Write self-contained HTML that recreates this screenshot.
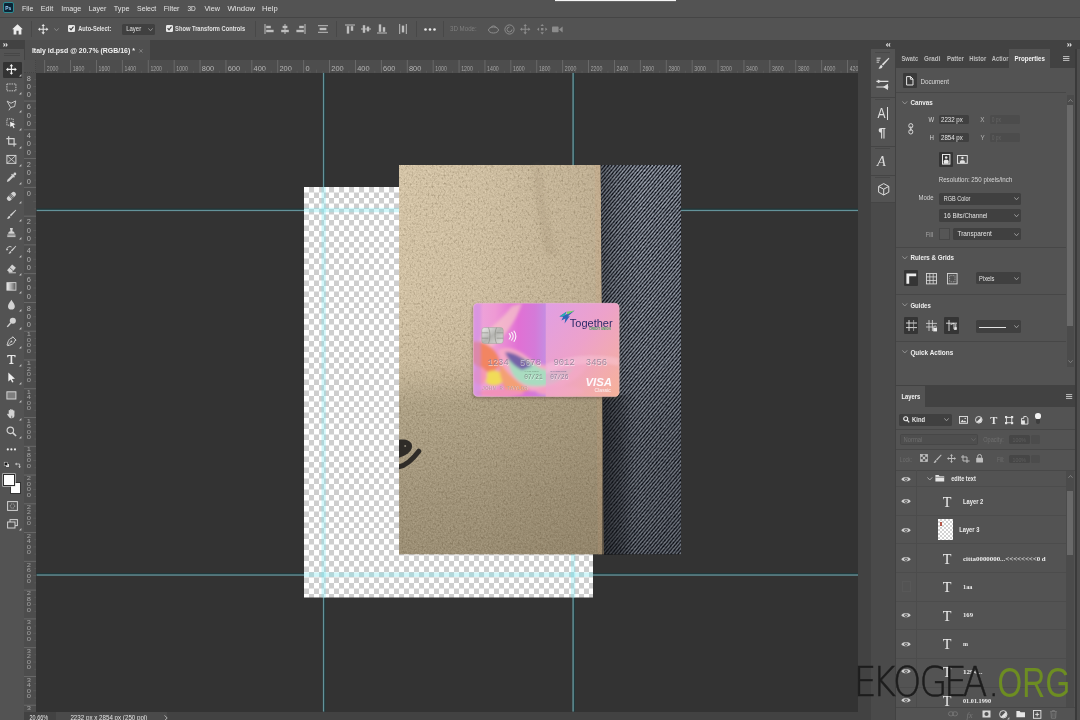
<!DOCTYPE html>
<html lang="en"><head><meta charset="utf-8"><title>Italy id.psd @ 20.7% (RGB/16)</title>
<style>
*{box-sizing:border-box;margin:0;padding:0}
html,body{width:1080px;height:720px;overflow:hidden;background:#535353}
body{position:relative;font-family:"Liberation Sans",sans-serif;font-size:7px;color:#dcdcdc}
.a{position:absolute}
svg{position:absolute;overflow:visible}
.tx{will-change:transform}
.dd{position:absolute;background:#404040;border-radius:1.5px}
.sep{position:absolute;background:#474747;height:1px}
.vsep{position:absolute;background:#484848;width:1px}
text{white-space:pre}
</style></head>
<body>
<div class="a" style="left:0;top:0;width:1080px;height:17px;background:#535353"></div>
<div class="a" style="left:555.4px;top:0;width:121px;height:1.1px;background:#f6f6f6"></div>
<div class="a" style="left:555.4px;top:1.1px;width:121px;height:1px;background:#666"></div>
<div class="a" style="left:3.2px;top:2.4px;width:10.8px;height:10.6px;background:#0b2536;border:1px solid #2d8c93;border-radius:2px"></div>
<div class="a" style="left:0;top:16.6px;width:1080px;height:1.1px;background:#454545"></div>
<div class="a" style="left:0;top:17.7px;width:1080px;height:22.3px;background:#535353"></div>
<svg style="left:12.2px;top:23.6px" width="11" height="10.6" viewBox="0 0 11 10.6" ><path d="M5.5 0.3 L0.2 5.2 H1.6 V10.4 H4.4 V6.8 H6.6 V10.4 H9.4 V5.2 H10.8 Z" fill="#ececec"/></svg>
<div class="vsep" style="left:30.5px;top:21px;height:16px"></div>
<svg style="left:38.2px;top:23.8px" width="10.4" height="10.4" viewBox="0 0 12 12" ><path d="M6 0 L8 2.4 H6.6 V5.4 H9.6 V4 L12 6 L9.6 8 V6.6 H6.6 V9.6 H8 L6 12 L4 9.6 H5.4 V6.6 H2.4 V8 L0 6 L2.4 4 V5.4 H5.4 V2.4 H4 Z" fill="#e6e6e6"/></svg>
<svg style="left:54.2px;top:27.6px" width="5" height="3.4" viewBox="0 0 5 3.4" ><path d="M0.4 0.4 L2.5 2.8 L4.6 0.4" fill="none" stroke="#8e8e8e" stroke-width="0.9"/></svg>
<div class="a" style="left:68.2px;top:25px;width:7px;height:7px;background:#e8e8e8;border-radius:1.2px"></div>
<svg style="left:69.2px;top:26.2px" width="5" height="4.6" viewBox="0 0 5 4.6" ><path d="M0.6 2.2 L2 3.8 L4.5 0.6" fill="none" stroke="#3a3a3a" stroke-width="1.1"/></svg>
<div class="dd" style="left:122px;top:23.6px;width:32.8px;height:11.4px"></div>
<svg style="left:147.6px;top:27.8px" width="5" height="3.4" viewBox="0 0 5 3.4" ><path d="M0.4 0.4 L2.5 2.8 L4.6 0.4" fill="none" stroke="#9a9a9a" stroke-width="0.9"/></svg>
<div class="a" style="left:165.6px;top:25px;width:7px;height:7px;background:#e8e8e8;border-radius:1.2px"></div>
<svg style="left:166.6px;top:26.2px" width="5" height="4.6" viewBox="0 0 5 4.6" ><path d="M0.6 2.2 L2 3.8 L4.5 0.6" fill="none" stroke="#3a3a3a" stroke-width="1.1"/></svg>
<div class="vsep" style="left:255px;top:21px;height:16px"></div>
<svg style="left:263.9px;top:24px" width="10" height="10" viewBox="0 0 10 10" ><rect x="0.5" y="0" width="1" height="10" fill="#bebebe"/><rect x="2.2" y="1.8" width="4.6" height="2.4" fill="#bebebe"/><rect x="2.2" y="5.8" width="7.4" height="2.4" fill="#bebebe"/></svg>
<svg style="left:280px;top:24px" width="10" height="10" viewBox="0 0 10 10" ><rect x="4.5" y="0" width="1" height="10" fill="#bebebe"/><rect x="2.6" y="1.8" width="4.8" height="2.4" fill="#bebebe"/><rect x="1.2" y="5.8" width="7.6" height="2.4" fill="#bebebe"/></svg>
<svg style="left:296px;top:24px" width="10" height="10" viewBox="0 0 10 10" ><rect x="8.5" y="0" width="1" height="10" fill="#bebebe"/><rect x="3.2" y="1.8" width="4.6" height="2.4" fill="#bebebe"/><rect x="0.4" y="5.8" width="7.4" height="2.4" fill="#bebebe"/></svg>
<svg style="left:317.9px;top:24px" width="10" height="10" viewBox="0 0 10 10" ><rect x="0" y="1.2" width="10" height="1" fill="#bebebe"/><rect x="0" y="7.8" width="10" height="1" fill="#bebebe"/><rect x="1.6" y="3.8" width="6.8" height="2.4" fill="#bebebe"/></svg>
<svg style="left:345px;top:24px" width="10" height="10" viewBox="0 0 10 10" ><rect x="0" y="0.5" width="10" height="1" fill="#bebebe"/><rect x="1.8" y="2.2" width="2.4" height="7.4" fill="#bebebe"/><rect x="5.8" y="2.2" width="2.4" height="4.6" fill="#bebebe"/></svg>
<svg style="left:360.5px;top:24px" width="10" height="10" viewBox="0 0 10 10" ><rect x="0" y="4.5" width="10" height="1" fill="#bebebe"/><rect x="1.8" y="1.2" width="2.4" height="7.6" fill="#bebebe"/><rect x="5.8" y="2.6" width="2.4" height="4.8" fill="#bebebe"/></svg>
<svg style="left:377.2px;top:24px" width="10" height="10" viewBox="0 0 10 10" ><rect x="0" y="8.5" width="10" height="1" fill="#bebebe"/><rect x="1.8" y="0.4" width="2.4" height="7.4" fill="#bebebe"/><rect x="5.8" y="3.2" width="2.4" height="4.6" fill="#bebebe"/></svg>
<svg style="left:398.3px;top:24px" width="10" height="10" viewBox="0 0 10 10" ><rect x="1.2" y="0" width="1" height="10" fill="#bebebe"/><rect x="7.8" y="0" width="1" height="10" fill="#bebebe"/><rect x="3.8" y="1.6" width="2.4" height="6.8" fill="#bebebe"/></svg>
<div class="vsep" style="left:336px;top:21px;height:16px"></div>
<div class="vsep" style="left:415.5px;top:21px;height:16px"></div>
<svg style="left:424.4px;top:27.6px" width="12" height="3" viewBox="0 0 12 3" ><circle cx="1.5" cy="1.5" r="1.3" fill="#eaeaea"/><circle cx="6" cy="1.5" r="1.3" fill="#eaeaea"/><circle cx="10.5" cy="1.5" r="1.3" fill="#eaeaea"/></svg>
<div class="vsep" style="left:443.3px;top:21px;height:16px"></div>
<svg style="left:488px;top:24px" width="11" height="10" viewBox="0 0 11 10" ><ellipse cx="5.5" cy="6" rx="5" ry="3" fill="none" stroke="#8c8c8c" stroke-width="1"/><path d="M2.5 4 A3.2 3.2 0 0 1 8.5 4" fill="none" stroke="#8c8c8c" stroke-width="1"/></svg>
<svg style="left:504px;top:23.6px" width="11" height="11" viewBox="0 0 11 11" ><circle cx="5.5" cy="5.5" r="4.6" fill="none" stroke="#8c8c8c" stroke-width="1"/><path d="M5.5 3 A2.5 2.5 0 1 0 8 5.5" fill="none" stroke="#8c8c8c" stroke-width="1"/></svg>
<svg style="left:519.8px;top:23.8px" width="10.4" height="10.4" viewBox="0 0 12 12" ><path d="M6 0 L8 2.4 H6.6 V5.4 H9.6 V4 L12 6 L9.6 8 V6.6 H6.6 V9.6 H8 L6 12 L4 9.6 H5.4 V6.6 H2.4 V8 L0 6 L2.4 4 V5.4 H5.4 V2.4 H4 Z" fill="#8c8c8c"/></svg>
<svg style="left:536.6px;top:23.8px" width="10.4" height="10.4" viewBox="0 0 12 12" ><path d="M6 0 L8 2.4 H4 Z M6 12 L4 9.6 H8 Z M0 6 L2.4 4 V8 Z M12 6 L9.6 8 V4 Z" fill="#8c8c8c"/><rect x="4.6" y="4.6" width="2.8" height="2.8" fill="#8c8c8c"/></svg>
<svg style="left:552.4px;top:25.6px" width="11" height="7" viewBox="0 0 11 7" ><rect x="0" y="0.6" width="6.6" height="5.6" rx="0.8" fill="#8c8c8c"/><path d="M7 3.5 L10.6 0.6 V6.4 Z" fill="#8c8c8c"/></svg>
<div class="a" style="left:0;top:40px;width:1080px;height:680px;background:#424242"></div>
<div class="a" style="left:24.5px;top:40.4px;width:125px;height:19.6px;background:#4f4f4f"></div>
<svg style="left:139.4px;top:48.6px" width="3.8" height="3.8" viewBox="0 0 3.8 3.8" ><path d="M0.3 0.3 L3.5 3.5 M3.5 0.3 L0.3 3.5" stroke="#8c8c8c" stroke-width="0.8"/></svg>
<div class="a" style="left:0;top:40px;width:24px;height:680px;background:#535353"></div>
<div class="a" style="left:0;top:40px;width:24px;height:8.5px;background:#424242"></div>
<svg style="left:3px;top:42.8px" width="4.6" height="3.8" viewBox="0 0 4.6 3.8" ><path d="M0.5 0.3 L1.8 1.9 L0.5 3.5 M2.8 0.3 L4.1 1.9 L2.8 3.5" fill="none" stroke="#e0e0e0" stroke-width="1.1"/></svg>
<div class="a" style="left:4px;top:53px;width:16px;height:1px;background:#474747"></div>
<div class="a" style="left:4px;top:55px;width:16px;height:1px;background:#474747"></div>
<div class="a" style="left:2.6px;top:61.5px;width:19.6px;height:16.2px;background:#333333;border-radius:1px"></div>
<svg style="left:6.4px;top:63.6px" width="10.8" height="10.8" viewBox="0 0 12 12" ><path d="M6 0 L8 2.4 H6.6 V5.4 H9.6 V4 L12 6 L9.6 8 V6.6 H6.6 V9.6 H8 L6 12 L4 9.6 H5.4 V6.6 H2.4 V8 L0 6 L2.4 4 V5.4 H5.4 V2.4 H4 Z" fill="#f2f2f2"/></svg>
<svg style="left:19.2px;top:73.6px" width="2.4" height="2.4" viewBox="0 0 2.4 2.4" ><path d="M2.4 0 V2.4 H0 Z" fill="#c0c0c0"/></svg>
<svg style="left:6.4px;top:81.73px" width="10.8" height="10.8" viewBox="0 0 12 12" ><rect x="1" y="2.2" width="10" height="7.6" fill="none" stroke="#d2d2d2" stroke-width="1" stroke-dasharray="1.6 1"/></svg>
<svg style="left:19.2px;top:91.73px" width="2.4" height="2.4" viewBox="0 0 2.4 2.4" ><path d="M2.4 0 V2.4 H0 Z" fill="#c0c0c0"/></svg>
<svg style="left:6.4px;top:99.86px" width="10.8" height="10.8" viewBox="0 0 12 12" ><path d="M1.2 1.2 L5.6 3.6 L10.8 1 L9.6 7.2 L5.2 8.4 L3.6 5.6 Z" fill="none" stroke="#d2d2d2" stroke-width="1"/><path d="M5.2 8.4 L3.2 11.4" stroke="#d2d2d2" stroke-width="1"/></svg>
<svg style="left:19.2px;top:109.86px" width="2.4" height="2.4" viewBox="0 0 2.4 2.4" ><path d="M2.4 0 V2.4 H0 Z" fill="#c0c0c0"/></svg>
<svg style="left:6.4px;top:117.99px" width="10.8" height="10.8" viewBox="0 0 12 12" ><rect x="1" y="1" width="7" height="7" fill="none" stroke="#d2d2d2" stroke-width="1" stroke-dasharray="1.4 0.9"/><path d="M4.6 4.2 L10.6 7 L8 7.8 L9.6 10.8 L8.4 11.4 L6.9 8.4 L5 10.2 Z" fill="#f0f0f0"/></svg>
<svg style="left:19.2px;top:127.99px" width="2.4" height="2.4" viewBox="0 0 2.4 2.4" ><path d="M2.4 0 V2.4 H0 Z" fill="#c0c0c0"/></svg>
<svg style="left:6.4px;top:136.12px" width="10.8" height="10.8" viewBox="0 0 12 12" ><path d="M3 0.4 V9 H11.6 M0.4 3 H9 V11.6" fill="none" stroke="#d2d2d2" stroke-width="1.3"/></svg>
<svg style="left:19.2px;top:146.12px" width="2.4" height="2.4" viewBox="0 0 2.4 2.4" ><path d="M2.4 0 V2.4 H0 Z" fill="#c0c0c0"/></svg>
<svg style="left:6.4px;top:154.25px" width="10.8" height="10.8" viewBox="0 0 12 12" ><rect x="1" y="1.6" width="10" height="8.8" fill="none" stroke="#d2d2d2" stroke-width="1.1"/><path d="M1 1.6 L11 10.4 M11 1.6 L1 10.4" stroke="#d2d2d2" stroke-width="0.9"/></svg>
<svg style="left:19.2px;top:164.25px" width="2.4" height="2.4" viewBox="0 0 2.4 2.4" ><path d="M2.4 0 V2.4 H0 Z" fill="#c0c0c0"/></svg>
<svg style="left:6.4px;top:172.38px" width="10.8" height="10.8" viewBox="0 0 12 12" ><path d="M1 11 L1.6 8.6 L6.6 3.6 L8.4 5.4 L3.4 10.4 Z" fill="#d2d2d2"/><path d="M6.2 2.6 L9.4 5.8 M7.6 4.4 L9.6 2.4" stroke="#d2d2d2" stroke-width="1.5"/><circle cx="9.9" cy="2.1" r="1.5" fill="#d2d2d2"/></svg>
<svg style="left:19.2px;top:182.38px" width="2.4" height="2.4" viewBox="0 0 2.4 2.4" ><path d="M2.4 0 V2.4 H0 Z" fill="#c0c0c0"/></svg>
<svg style="left:6.4px;top:190.51px" width="10.8" height="10.8" viewBox="0 0 12 12" ><g transform="rotate(-45 6 6)"><rect x="0" y="3.4" width="12" height="5.2" rx="2.4" fill="#d2d2d2"/><rect x="4.2" y="3.4" width="3.6" height="5.2" fill="#6a6a6a"/><circle cx="5.2" cy="5" r="0.5" fill="#d2d2d2"/><circle cx="6.8" cy="5" r="0.5" fill="#d2d2d2"/><circle cx="5.2" cy="7" r="0.5" fill="#d2d2d2"/><circle cx="6.8" cy="7" r="0.5" fill="#d2d2d2"/></g></svg>
<svg style="left:19.2px;top:200.51px" width="2.4" height="2.4" viewBox="0 0 2.4 2.4" ><path d="M2.4 0 V2.4 H0 Z" fill="#c0c0c0"/></svg>
<svg style="left:6.4px;top:208.64px" width="10.8" height="10.8" viewBox="0 0 12 12" ><path d="M10.8 0.8 L11.4 1.4 L5.6 8 L4.2 6.6 Z" fill="#d2d2d2"/><path d="M3.6 7.4 L4.9 8.7 C4.6 10.6 2.6 11.2 0.8 10.8 C2 10.2 2 8.2 3.6 7.4 Z" fill="#d2d2d2"/></svg>
<svg style="left:19.2px;top:218.64px" width="2.4" height="2.4" viewBox="0 0 2.4 2.4" ><path d="M2.4 0 V2.4 H0 Z" fill="#c0c0c0"/></svg>
<svg style="left:6.4px;top:226.77px" width="10.8" height="10.8" viewBox="0 0 12 12" ><path d="M4.4 1 H7.6 L7 4.8 C8.6 5.2 9.6 5.8 9.6 7.4 H2.4 C2.4 5.8 3.4 5.2 5 4.8 Z" fill="#d2d2d2"/><rect x="1.4" y="8.4" width="9.2" height="1.2" fill="#d2d2d2"/><rect x="1.4" y="10.2" width="9.2" height="1" fill="#d2d2d2"/></svg>
<svg style="left:19.2px;top:236.77px" width="2.4" height="2.4" viewBox="0 0 2.4 2.4" ><path d="M2.4 0 V2.4 H0 Z" fill="#c0c0c0"/></svg>
<svg style="left:6.4px;top:244.9px" width="10.8" height="10.8" viewBox="0 0 12 12" ><path d="M10.8 0.8 L11.4 1.4 L6.6 7.2 L5.4 6 Z" fill="#d2d2d2"/><path d="M4.8 6.6 L6 7.8 C5.6 9.4 4 10 2.6 9.6 C3.6 9 3.6 7.4 4.8 6.6 Z" fill="#d2d2d2"/><path d="M1 5.4 A3.4 3.4 0 0 1 6.2 2.2" fill="none" stroke="#d2d2d2" stroke-width="1"/><path d="M0 4.2 L1 6.4 L2.6 4.6 Z" fill="#d2d2d2"/></svg>
<svg style="left:19.2px;top:254.9px" width="2.4" height="2.4" viewBox="0 0 2.4 2.4" ><path d="M2.4 0 V2.4 H0 Z" fill="#c0c0c0"/></svg>
<svg style="left:6.4px;top:263.03px" width="10.8" height="10.8" viewBox="0 0 12 12" ><path d="M6.8 1.6 L11 5.4 L6.6 10.2 H3.6 L1.2 8 Z" fill="#d2d2d2"/><path d="M3.8 4.8 L8 8.6" stroke="#555" stroke-width="0.9"/><rect x="3" y="10.4" width="8" height="1" fill="#d2d2d2"/></svg>
<svg style="left:19.2px;top:273.03px" width="2.4" height="2.4" viewBox="0 0 2.4 2.4" ><path d="M2.4 0 V2.4 H0 Z" fill="#c0c0c0"/></svg>
<svg style="left:6.4px;top:281.16px" width="10.8" height="10.8" viewBox="0 0 12 12" ><defs><linearGradient id="tg" x1="0" x2="1"><stop offset="0" stop-color="#f4f4f4"/><stop offset="1" stop-color="#555"/></linearGradient></defs><rect x="1" y="1.8" width="10" height="8.4" fill="url(#tg)" stroke="#d2d2d2" stroke-width="1"/></svg>
<svg style="left:19.2px;top:291.16px" width="2.4" height="2.4" viewBox="0 0 2.4 2.4" ><path d="M2.4 0 V2.4 H0 Z" fill="#c0c0c0"/></svg>
<svg style="left:6.4px;top:299.29px" width="10.8" height="10.8" viewBox="0 0 12 12" ><path d="M6 0.8 C7.4 3.6 9.8 5.6 9.8 8 A3.8 3.8 0 0 1 2.2 8 C2.2 5.6 4.6 3.6 6 0.8 Z" fill="#d2d2d2"/></svg>
<svg style="left:19.2px;top:309.29px" width="2.4" height="2.4" viewBox="0 0 2.4 2.4" ><path d="M2.4 0 V2.4 H0 Z" fill="#c0c0c0"/></svg>
<svg style="left:6.4px;top:317.42px" width="10.8" height="10.8" viewBox="0 0 12 12" ><circle cx="7.6" cy="4.2" r="3.4" fill="#d2d2d2"/><path d="M5.2 6.6 L1.4 11" stroke="#d2d2d2" stroke-width="1.6"/></svg>
<svg style="left:19.2px;top:327.42px" width="2.4" height="2.4" viewBox="0 0 2.4 2.4" ><path d="M2.4 0 V2.4 H0 Z" fill="#c0c0c0"/></svg>
<svg style="left:6.4px;top:335.55px" width="10.8" height="10.8" viewBox="0 0 12 12" ><path d="M7.4 0.8 L11.2 4.6 L9.6 5.4 C9.2 8 8 9.2 2 10.8 L1.2 10 C2.8 4 4 2.8 6.6 2.4 Z" fill="none" stroke="#d2d2d2" stroke-width="1.1"/><circle cx="6" cy="6" r="1" fill="#d2d2d2"/><path d="M1.4 10.6 L5.4 6.6" stroke="#d2d2d2" stroke-width="0.8"/></svg>
<svg style="left:19.2px;top:345.55px" width="2.4" height="2.4" viewBox="0 0 2.4 2.4" ><path d="M2.4 0 V2.4 H0 Z" fill="#c0c0c0"/></svg>
<svg style="left:6.4px;top:353.68px" width="10.8" height="10.8" viewBox="0 0 12 12" ><path d="M1.4 1 H10.6 V3.6 H9.6 L9.2 2.2 H6.9 V9.8 L8.4 10.2 V11 H3.6 V10.2 L5.1 9.8 V2.2 H2.8 L2.4 3.6 H1.4 Z" fill="#e8e8e8"/></svg>
<svg style="left:19.2px;top:363.68px" width="2.4" height="2.4" viewBox="0 0 2.4 2.4" ><path d="M2.4 0 V2.4 H0 Z" fill="#c0c0c0"/></svg>
<svg style="left:6.4px;top:371.81px" width="10.8" height="10.8" viewBox="0 0 12 12" ><path d="M2.6 0.6 L10 7.6 L6.6 7.8 L8.4 11.2 L6.8 11.8 L5.2 8.4 L2.6 10.6 Z" fill="#ececec"/></svg>
<svg style="left:19.2px;top:381.81px" width="2.4" height="2.4" viewBox="0 0 2.4 2.4" ><path d="M2.4 0 V2.4 H0 Z" fill="#c0c0c0"/></svg>
<svg style="left:6.4px;top:389.94px" width="10.8" height="10.8" viewBox="0 0 12 12" ><rect x="1" y="2" width="10" height="8" fill="#7d7d7d" stroke="#d2d2d2" stroke-width="1.1"/></svg>
<svg style="left:19.2px;top:399.94px" width="2.4" height="2.4" viewBox="0 0 2.4 2.4" ><path d="M2.4 0 V2.4 H0 Z" fill="#c0c0c0"/></svg>
<svg style="left:6.4px;top:408.07px" width="10.8" height="10.8" viewBox="0 0 12 12" ><path d="M3 6.2 V3 A0.8 0.8 0 0 1 4.6 3 V1.8 A0.8 0.8 0 0 1 6.2 1.8 V2.4 A0.8 0.8 0 0 1 7.8 2.4 V3.4 A0.8 0.8 0 0 1 9.4 3.4 V8 C9.4 10.4 8 11.4 6.2 11.4 C4.4 11.4 3.6 10.6 1.4 7.4 C1 6.6 2 6 3 7 Z" fill="#d2d2d2"/><path d="M6.4 8.6 A3 3 0 1 0 9.6 6.6" stroke="#535353" stroke-width="0.8" fill="none"/></svg>
<svg style="left:19.2px;top:418.07px" width="2.4" height="2.4" viewBox="0 0 2.4 2.4" ><path d="M2.4 0 V2.4 H0 Z" fill="#c0c0c0"/></svg>
<svg style="left:6.4px;top:426.2px" width="10.8" height="10.8" viewBox="0 0 12 12" ><circle cx="4.8" cy="4.8" r="3.6" fill="none" stroke="#d2d2d2" stroke-width="1.3"/><path d="M7.4 7.4 L11.2 11.2" stroke="#d2d2d2" stroke-width="1.7"/></svg>
<svg style="left:19.2px;top:436.2px" width="2.4" height="2.4" viewBox="0 0 2.4 2.4" ><path d="M2.4 0 V2.4 H0 Z" fill="#c0c0c0"/></svg>
<svg style="left:6.4px;top:444.33px" width="10.8" height="10.8" viewBox="0 0 12 12" ><circle cx="2" cy="6" r="1.2" fill="#eaeaea"/><circle cx="6" cy="6" r="1.2" fill="#eaeaea"/><circle cx="10" cy="6" r="1.2" fill="#eaeaea"/></svg>
<svg style="left:3.6px;top:462px" width="5.4" height="5.4" viewBox="0 0 5.4 5.4" ><rect x="1.8" y="1.8" width="3.4" height="3.4" fill="#f0f0f0" stroke="#222" stroke-width="0.5"/><rect x="0.2" y="0.2" width="3.4" height="3.4" fill="#1a1a1a" stroke="#ddd" stroke-width="0.5"/></svg>
<svg style="left:15px;top:461.6px" width="6" height="6" viewBox="0 0 6 6" ><path d="M1 2 H4.6 V5.4" fill="none" stroke="#d0d0d0" stroke-width="0.8"/><path d="M0 2 L1.6 0.6 V3.4 Z M4.6 6 L3.2 4.4 H6 Z" fill="#d0d0d0"/></svg>
<div class="a" style="left:9.6px;top:481.8px;width:11px;height:12px;background:#fdfdfd;border:0.6px solid #333"></div>
<div class="a" style="left:3px;top:474px;width:12px;height:12.2px;background:#ffffff;border:0.6px solid #2c2c2c;box-shadow:0 0 0 0.6px #ddd"></div>
<svg style="left:6.6px;top:501px" width="11" height="10" viewBox="0 0 11 10" ><rect x="0.6" y="0.6" width="9.8" height="8.8" fill="none" stroke="#d2d2d2" stroke-width="1"/><circle cx="5.5" cy="5" r="2.2" fill="none" stroke="#d2d2d2" stroke-width="0.7" stroke-dasharray="0.9 0.7"/></svg>
<svg style="left:6.6px;top:518.6px" width="11" height="10" viewBox="0 0 11 10" ><rect x="3" y="0.6" width="7.4" height="6" fill="none" stroke="#d2d2d2" stroke-width="1"/><rect x="0.6" y="3" width="7.4" height="6" fill="#535353" stroke="#d2d2d2" stroke-width="1"/></svg>
<svg style="left:19.2px;top:528px" width="2.4" height="2.4" viewBox="0 0 2.4 2.4" ><path d="M2.4 0 V2.4 H0 Z" fill="#c0c0c0"/></svg>
<div class="a" style="left:24px;top:60px;width:834.4px;height:12.8px;background:#4d4d4d"></div>
<div class="a" style="left:24px;top:60px;width:12.4px;height:660px;background:#4d4d4d"></div>
<div class="a" style="left:24px;top:60px;width:12.4px;height:12.8px;background:#505050;border-right:1px dotted #454545;border-bottom:1px dotted #454545"></div>
<svg class="tx" style="left:0;top:0" width="1080" height="720" viewBox="0 0 1080 720" font-family="Liberation Sans, sans-serif"><rect x="44.20" y="60" width="0.9" height="12.8" fill="#6c6c6c"/><text x="46.80" y="70.7" font-size="7.2" fill="#a4a4a4" textLength="11.6" lengthAdjust="spacingAndGlyphs">2000</text><rect x="70.10" y="60" width="0.9" height="12.8" fill="#6c6c6c"/><text x="72.70" y="70.7" font-size="7.2" fill="#a4a4a4" textLength="11.6" lengthAdjust="spacingAndGlyphs">1800</text><rect x="96.00" y="60" width="0.9" height="12.8" fill="#6c6c6c"/><text x="98.60" y="70.7" font-size="7.2" fill="#a4a4a4" textLength="11.6" lengthAdjust="spacingAndGlyphs">1600</text><rect x="121.90" y="60" width="0.9" height="12.8" fill="#6c6c6c"/><text x="124.50" y="70.7" font-size="7.2" fill="#a4a4a4" textLength="11.6" lengthAdjust="spacingAndGlyphs">1400</text><rect x="147.80" y="60" width="0.9" height="12.8" fill="#6c6c6c"/><text x="150.40" y="70.7" font-size="7.2" fill="#a4a4a4" textLength="11.6" lengthAdjust="spacingAndGlyphs">1200</text><rect x="173.70" y="60" width="0.9" height="12.8" fill="#6c6c6c"/><text x="176.30" y="70.7" font-size="7.2" fill="#a4a4a4" textLength="11.6" lengthAdjust="spacingAndGlyphs">1000</text><rect x="199.60" y="60" width="0.9" height="12.8" fill="#6c6c6c"/><text x="201.80" y="70.8" font-size="7.4" fill="#b4b4b4">800</text><rect x="225.50" y="60" width="0.9" height="12.8" fill="#6c6c6c"/><text x="227.70" y="70.8" font-size="7.4" fill="#b4b4b4">600</text><rect x="251.40" y="60" width="0.9" height="12.8" fill="#6c6c6c"/><text x="253.60" y="70.8" font-size="7.4" fill="#b4b4b4">400</text><rect x="277.30" y="60" width="0.9" height="12.8" fill="#6c6c6c"/><text x="279.50" y="70.8" font-size="7.4" fill="#b4b4b4">200</text><rect x="303.20" y="60" width="0.9" height="12.8" fill="#6c6c6c"/><text x="305.40" y="70.8" font-size="7.4" fill="#b4b4b4">0</text><rect x="329.10" y="60" width="0.9" height="12.8" fill="#6c6c6c"/><text x="331.30" y="70.8" font-size="7.4" fill="#b4b4b4">200</text><rect x="355.00" y="60" width="0.9" height="12.8" fill="#6c6c6c"/><text x="357.20" y="70.8" font-size="7.4" fill="#b4b4b4">400</text><rect x="380.90" y="60" width="0.9" height="12.8" fill="#6c6c6c"/><text x="383.10" y="70.8" font-size="7.4" fill="#b4b4b4">600</text><rect x="406.80" y="60" width="0.9" height="12.8" fill="#6c6c6c"/><text x="409.00" y="70.8" font-size="7.4" fill="#b4b4b4">800</text><rect x="432.70" y="60" width="0.9" height="12.8" fill="#6c6c6c"/><text x="435.30" y="70.7" font-size="7.2" fill="#a4a4a4" textLength="11.6" lengthAdjust="spacingAndGlyphs">1000</text><rect x="458.60" y="60" width="0.9" height="12.8" fill="#6c6c6c"/><text x="461.20" y="70.7" font-size="7.2" fill="#a4a4a4" textLength="11.6" lengthAdjust="spacingAndGlyphs">1200</text><rect x="484.50" y="60" width="0.9" height="12.8" fill="#6c6c6c"/><text x="487.10" y="70.7" font-size="7.2" fill="#a4a4a4" textLength="11.6" lengthAdjust="spacingAndGlyphs">1400</text><rect x="510.40" y="60" width="0.9" height="12.8" fill="#6c6c6c"/><text x="513.00" y="70.7" font-size="7.2" fill="#a4a4a4" textLength="11.6" lengthAdjust="spacingAndGlyphs">1600</text><rect x="536.30" y="60" width="0.9" height="12.8" fill="#6c6c6c"/><text x="538.90" y="70.7" font-size="7.2" fill="#a4a4a4" textLength="11.6" lengthAdjust="spacingAndGlyphs">1800</text><rect x="562.20" y="60" width="0.9" height="12.8" fill="#6c6c6c"/><text x="564.80" y="70.7" font-size="7.2" fill="#a4a4a4" textLength="11.6" lengthAdjust="spacingAndGlyphs">2000</text><rect x="588.10" y="60" width="0.9" height="12.8" fill="#6c6c6c"/><text x="590.70" y="70.7" font-size="7.2" fill="#a4a4a4" textLength="11.6" lengthAdjust="spacingAndGlyphs">2200</text><rect x="614.00" y="60" width="0.9" height="12.8" fill="#6c6c6c"/><text x="616.60" y="70.7" font-size="7.2" fill="#a4a4a4" textLength="11.6" lengthAdjust="spacingAndGlyphs">2400</text><rect x="639.90" y="60" width="0.9" height="12.8" fill="#6c6c6c"/><text x="642.50" y="70.7" font-size="7.2" fill="#a4a4a4" textLength="11.6" lengthAdjust="spacingAndGlyphs">2600</text><rect x="665.80" y="60" width="0.9" height="12.8" fill="#6c6c6c"/><text x="668.40" y="70.7" font-size="7.2" fill="#a4a4a4" textLength="11.6" lengthAdjust="spacingAndGlyphs">2800</text><rect x="691.70" y="60" width="0.9" height="12.8" fill="#6c6c6c"/><text x="694.30" y="70.7" font-size="7.2" fill="#a4a4a4" textLength="11.6" lengthAdjust="spacingAndGlyphs">3000</text><rect x="717.60" y="60" width="0.9" height="12.8" fill="#6c6c6c"/><text x="720.20" y="70.7" font-size="7.2" fill="#a4a4a4" textLength="11.6" lengthAdjust="spacingAndGlyphs">3200</text><rect x="743.50" y="60" width="0.9" height="12.8" fill="#6c6c6c"/><text x="746.10" y="70.7" font-size="7.2" fill="#a4a4a4" textLength="11.6" lengthAdjust="spacingAndGlyphs">3400</text><rect x="769.40" y="60" width="0.9" height="12.8" fill="#6c6c6c"/><text x="772.00" y="70.7" font-size="7.2" fill="#a4a4a4" textLength="11.6" lengthAdjust="spacingAndGlyphs">3600</text><rect x="795.30" y="60" width="0.9" height="12.8" fill="#6c6c6c"/><text x="797.90" y="70.7" font-size="7.2" fill="#a4a4a4" textLength="11.6" lengthAdjust="spacingAndGlyphs">3800</text><rect x="821.20" y="60" width="0.9" height="12.8" fill="#6c6c6c"/><text x="823.80" y="70.7" font-size="7.2" fill="#a4a4a4" textLength="11.6" lengthAdjust="spacingAndGlyphs">4000</text><rect x="847.10" y="60" width="0.9" height="12.8" fill="#6c6c6c"/><text x="849.70" y="70.7" font-size="7.2" fill="#a4a4a4" textLength="11.6" lengthAdjust="spacingAndGlyphs">4200</text><rect x="50.68" y="70.80" width="0.8" height="2" fill="#5c5c5c"/><rect x="57.15" y="69.60" width="0.8" height="3.2" fill="#5c5c5c"/><rect x="63.62" y="70.80" width="0.8" height="2" fill="#5c5c5c"/><rect x="76.57" y="70.80" width="0.8" height="2" fill="#5c5c5c"/><rect x="83.05" y="69.60" width="0.8" height="3.2" fill="#5c5c5c"/><rect x="89.53" y="70.80" width="0.8" height="2" fill="#5c5c5c"/><rect x="102.47" y="70.80" width="0.8" height="2" fill="#5c5c5c"/><rect x="108.95" y="69.60" width="0.8" height="3.2" fill="#5c5c5c"/><rect x="115.43" y="70.80" width="0.8" height="2" fill="#5c5c5c"/><rect x="128.38" y="70.80" width="0.8" height="2" fill="#5c5c5c"/><rect x="134.85" y="69.60" width="0.8" height="3.2" fill="#5c5c5c"/><rect x="141.32" y="70.80" width="0.8" height="2" fill="#5c5c5c"/><rect x="154.28" y="70.80" width="0.8" height="2" fill="#5c5c5c"/><rect x="160.75" y="69.60" width="0.8" height="3.2" fill="#5c5c5c"/><rect x="167.22" y="70.80" width="0.8" height="2" fill="#5c5c5c"/><rect x="180.18" y="70.80" width="0.8" height="2" fill="#5c5c5c"/><rect x="186.65" y="69.60" width="0.8" height="3.2" fill="#5c5c5c"/><rect x="193.12" y="70.80" width="0.8" height="2" fill="#5c5c5c"/><rect x="206.07" y="70.80" width="0.8" height="2" fill="#5c5c5c"/><rect x="212.55" y="69.60" width="0.8" height="3.2" fill="#5c5c5c"/><rect x="219.02" y="70.80" width="0.8" height="2" fill="#5c5c5c"/><rect x="231.97" y="70.80" width="0.8" height="2" fill="#5c5c5c"/><rect x="238.45" y="69.60" width="0.8" height="3.2" fill="#5c5c5c"/><rect x="244.92" y="70.80" width="0.8" height="2" fill="#5c5c5c"/><rect x="257.88" y="70.80" width="0.8" height="2" fill="#5c5c5c"/><rect x="264.35" y="69.60" width="0.8" height="3.2" fill="#5c5c5c"/><rect x="270.82" y="70.80" width="0.8" height="2" fill="#5c5c5c"/><rect x="283.77" y="70.80" width="0.8" height="2" fill="#5c5c5c"/><rect x="290.25" y="69.60" width="0.8" height="3.2" fill="#5c5c5c"/><rect x="296.72" y="70.80" width="0.8" height="2" fill="#5c5c5c"/><rect x="309.68" y="70.80" width="0.8" height="2" fill="#5c5c5c"/><rect x="316.15" y="69.60" width="0.8" height="3.2" fill="#5c5c5c"/><rect x="322.62" y="70.80" width="0.8" height="2" fill="#5c5c5c"/><rect x="335.57" y="70.80" width="0.8" height="2" fill="#5c5c5c"/><rect x="342.05" y="69.60" width="0.8" height="3.2" fill="#5c5c5c"/><rect x="348.52" y="70.80" width="0.8" height="2" fill="#5c5c5c"/><rect x="361.47" y="70.80" width="0.8" height="2" fill="#5c5c5c"/><rect x="367.95" y="69.60" width="0.8" height="3.2" fill="#5c5c5c"/><rect x="374.42" y="70.80" width="0.8" height="2" fill="#5c5c5c"/><rect x="387.38" y="70.80" width="0.8" height="2" fill="#5c5c5c"/><rect x="393.85" y="69.60" width="0.8" height="3.2" fill="#5c5c5c"/><rect x="400.32" y="70.80" width="0.8" height="2" fill="#5c5c5c"/><rect x="413.27" y="70.80" width="0.8" height="2" fill="#5c5c5c"/><rect x="419.75" y="69.60" width="0.8" height="3.2" fill="#5c5c5c"/><rect x="426.22" y="70.80" width="0.8" height="2" fill="#5c5c5c"/><rect x="439.17" y="70.80" width="0.8" height="2" fill="#5c5c5c"/><rect x="445.65" y="69.60" width="0.8" height="3.2" fill="#5c5c5c"/><rect x="452.12" y="70.80" width="0.8" height="2" fill="#5c5c5c"/><rect x="465.07" y="70.80" width="0.8" height="2" fill="#5c5c5c"/><rect x="471.55" y="69.60" width="0.8" height="3.2" fill="#5c5c5c"/><rect x="478.02" y="70.80" width="0.8" height="2" fill="#5c5c5c"/><rect x="490.97" y="70.80" width="0.8" height="2" fill="#5c5c5c"/><rect x="497.45" y="69.60" width="0.8" height="3.2" fill="#5c5c5c"/><rect x="503.92" y="70.80" width="0.8" height="2" fill="#5c5c5c"/><rect x="516.88" y="70.80" width="0.8" height="2" fill="#5c5c5c"/><rect x="523.35" y="69.60" width="0.8" height="3.2" fill="#5c5c5c"/><rect x="529.83" y="70.80" width="0.8" height="2" fill="#5c5c5c"/><rect x="542.77" y="70.80" width="0.8" height="2" fill="#5c5c5c"/><rect x="549.25" y="69.60" width="0.8" height="3.2" fill="#5c5c5c"/><rect x="555.72" y="70.80" width="0.8" height="2" fill="#5c5c5c"/><rect x="568.67" y="70.80" width="0.8" height="2" fill="#5c5c5c"/><rect x="575.15" y="69.60" width="0.8" height="3.2" fill="#5c5c5c"/><rect x="581.62" y="70.80" width="0.8" height="2" fill="#5c5c5c"/><rect x="594.58" y="70.80" width="0.8" height="2" fill="#5c5c5c"/><rect x="601.05" y="69.60" width="0.8" height="3.2" fill="#5c5c5c"/><rect x="607.52" y="70.80" width="0.8" height="2" fill="#5c5c5c"/><rect x="620.47" y="70.80" width="0.8" height="2" fill="#5c5c5c"/><rect x="626.95" y="69.60" width="0.8" height="3.2" fill="#5c5c5c"/><rect x="633.42" y="70.80" width="0.8" height="2" fill="#5c5c5c"/><rect x="646.38" y="70.80" width="0.8" height="2" fill="#5c5c5c"/><rect x="652.85" y="69.60" width="0.8" height="3.2" fill="#5c5c5c"/><rect x="659.33" y="70.80" width="0.8" height="2" fill="#5c5c5c"/><rect x="672.27" y="70.80" width="0.8" height="2" fill="#5c5c5c"/><rect x="678.75" y="69.60" width="0.8" height="3.2" fill="#5c5c5c"/><rect x="685.22" y="70.80" width="0.8" height="2" fill="#5c5c5c"/><rect x="698.17" y="70.80" width="0.8" height="2" fill="#5c5c5c"/><rect x="704.65" y="69.60" width="0.8" height="3.2" fill="#5c5c5c"/><rect x="711.12" y="70.80" width="0.8" height="2" fill="#5c5c5c"/><rect x="724.08" y="70.80" width="0.8" height="2" fill="#5c5c5c"/><rect x="730.55" y="69.60" width="0.8" height="3.2" fill="#5c5c5c"/><rect x="737.02" y="70.80" width="0.8" height="2" fill="#5c5c5c"/><rect x="749.97" y="70.80" width="0.8" height="2" fill="#5c5c5c"/><rect x="756.45" y="69.60" width="0.8" height="3.2" fill="#5c5c5c"/><rect x="762.92" y="70.80" width="0.8" height="2" fill="#5c5c5c"/><rect x="775.88" y="70.80" width="0.8" height="2" fill="#5c5c5c"/><rect x="782.35" y="69.60" width="0.8" height="3.2" fill="#5c5c5c"/><rect x="788.83" y="70.80" width="0.8" height="2" fill="#5c5c5c"/><rect x="801.77" y="70.80" width="0.8" height="2" fill="#5c5c5c"/><rect x="808.25" y="69.60" width="0.8" height="3.2" fill="#5c5c5c"/><rect x="814.72" y="70.80" width="0.8" height="2" fill="#5c5c5c"/><rect x="827.67" y="70.80" width="0.8" height="2" fill="#5c5c5c"/><rect x="834.15" y="69.60" width="0.8" height="3.2" fill="#5c5c5c"/><rect x="840.62" y="70.80" width="0.8" height="2" fill="#5c5c5c"/><rect x="853.58" y="70.80" width="0.8" height="2" fill="#5c5c5c"/><rect x="24" y="100.59" width="12.4" height="0.9" fill="#6c6c6c"/><rect x="24" y="129.36" width="12.4" height="0.9" fill="#6c6c6c"/><rect x="24" y="158.13" width="12.4" height="0.9" fill="#6c6c6c"/><rect x="24" y="186.90" width="12.4" height="0.9" fill="#6c6c6c"/><rect x="24" y="215.67" width="12.4" height="0.9" fill="#6c6c6c"/><rect x="24" y="244.44" width="12.4" height="0.9" fill="#6c6c6c"/><rect x="24" y="273.21" width="12.4" height="0.9" fill="#6c6c6c"/><rect x="24" y="301.98" width="12.4" height="0.9" fill="#6c6c6c"/><rect x="24" y="330.75" width="12.4" height="0.9" fill="#6c6c6c"/><rect x="24" y="359.52" width="12.4" height="0.9" fill="#6c6c6c"/><rect x="24" y="388.29" width="12.4" height="0.9" fill="#6c6c6c"/><rect x="24" y="417.06" width="12.4" height="0.9" fill="#6c6c6c"/><rect x="24" y="445.83" width="12.4" height="0.9" fill="#6c6c6c"/><rect x="24" y="474.60" width="12.4" height="0.9" fill="#6c6c6c"/><rect x="24" y="503.37" width="12.4" height="0.9" fill="#6c6c6c"/><rect x="24" y="532.14" width="12.4" height="0.9" fill="#6c6c6c"/><rect x="24" y="560.91" width="12.4" height="0.9" fill="#6c6c6c"/><rect x="24" y="589.68" width="12.4" height="0.9" fill="#6c6c6c"/><rect x="24" y="618.45" width="12.4" height="0.9" fill="#6c6c6c"/><rect x="24" y="647.22" width="12.4" height="0.9" fill="#6c6c6c"/><rect x="24" y="675.99" width="12.4" height="0.9" fill="#6c6c6c"/><rect x="24" y="704.76" width="12.4" height="0.9" fill="#6c6c6c"/><text x="28.9" y="80.62" font-size="7.4" fill="#b4b4b4" text-anchor="middle">8</text><text x="28.9" y="88.92" font-size="7.4" fill="#b4b4b4" text-anchor="middle">0</text><text x="28.9" y="97.22" font-size="7.4" fill="#b4b4b4" text-anchor="middle">0</text><text x="28.9" y="109.39" font-size="7.4" fill="#b4b4b4" text-anchor="middle">6</text><text x="28.9" y="117.69" font-size="7.4" fill="#b4b4b4" text-anchor="middle">0</text><text x="28.9" y="125.99" font-size="7.4" fill="#b4b4b4" text-anchor="middle">0</text><text x="28.9" y="138.16" font-size="7.4" fill="#b4b4b4" text-anchor="middle">4</text><text x="28.9" y="146.46" font-size="7.4" fill="#b4b4b4" text-anchor="middle">0</text><text x="28.9" y="154.76" font-size="7.4" fill="#b4b4b4" text-anchor="middle">0</text><text x="28.9" y="166.93" font-size="7.4" fill="#b4b4b4" text-anchor="middle">2</text><text x="28.9" y="175.23" font-size="7.4" fill="#b4b4b4" text-anchor="middle">0</text><text x="28.9" y="183.53" font-size="7.4" fill="#b4b4b4" text-anchor="middle">0</text><text x="28.9" y="195.70" font-size="7.4" fill="#b4b4b4" text-anchor="middle">0</text><text x="28.9" y="224.47" font-size="7.4" fill="#b4b4b4" text-anchor="middle">2</text><text x="28.9" y="232.77" font-size="7.4" fill="#b4b4b4" text-anchor="middle">0</text><text x="28.9" y="241.07" font-size="7.4" fill="#b4b4b4" text-anchor="middle">0</text><text x="28.9" y="253.24" font-size="7.4" fill="#b4b4b4" text-anchor="middle">4</text><text x="28.9" y="261.54" font-size="7.4" fill="#b4b4b4" text-anchor="middle">0</text><text x="28.9" y="269.84" font-size="7.4" fill="#b4b4b4" text-anchor="middle">0</text><text x="28.9" y="282.01" font-size="7.4" fill="#b4b4b4" text-anchor="middle">6</text><text x="28.9" y="290.31" font-size="7.4" fill="#b4b4b4" text-anchor="middle">0</text><text x="28.9" y="298.61" font-size="7.4" fill="#b4b4b4" text-anchor="middle">0</text><text x="28.9" y="310.78" font-size="7.4" fill="#b4b4b4" text-anchor="middle">8</text><text x="28.9" y="319.08" font-size="7.4" fill="#b4b4b4" text-anchor="middle">0</text><text x="28.9" y="327.38" font-size="7.4" fill="#b4b4b4" text-anchor="middle">0</text><text x="26.8" y="336.35" font-size="5.4" fill="#a4a4a4" textLength="4.2" lengthAdjust="spacingAndGlyphs">1</text><text x="26.8" y="341.85" font-size="5.4" fill="#a4a4a4" textLength="4.2" lengthAdjust="spacingAndGlyphs">0</text><text x="26.8" y="347.35" font-size="5.4" fill="#a4a4a4" textLength="4.2" lengthAdjust="spacingAndGlyphs">0</text><text x="26.8" y="352.85" font-size="5.4" fill="#a4a4a4" textLength="4.2" lengthAdjust="spacingAndGlyphs">0</text><text x="26.8" y="365.12" font-size="5.4" fill="#a4a4a4" textLength="4.2" lengthAdjust="spacingAndGlyphs">1</text><text x="26.8" y="370.62" font-size="5.4" fill="#a4a4a4" textLength="4.2" lengthAdjust="spacingAndGlyphs">2</text><text x="26.8" y="376.12" font-size="5.4" fill="#a4a4a4" textLength="4.2" lengthAdjust="spacingAndGlyphs">0</text><text x="26.8" y="381.62" font-size="5.4" fill="#a4a4a4" textLength="4.2" lengthAdjust="spacingAndGlyphs">0</text><text x="26.8" y="393.89" font-size="5.4" fill="#a4a4a4" textLength="4.2" lengthAdjust="spacingAndGlyphs">1</text><text x="26.8" y="399.39" font-size="5.4" fill="#a4a4a4" textLength="4.2" lengthAdjust="spacingAndGlyphs">4</text><text x="26.8" y="404.89" font-size="5.4" fill="#a4a4a4" textLength="4.2" lengthAdjust="spacingAndGlyphs">0</text><text x="26.8" y="410.39" font-size="5.4" fill="#a4a4a4" textLength="4.2" lengthAdjust="spacingAndGlyphs">0</text><text x="26.8" y="422.66" font-size="5.4" fill="#a4a4a4" textLength="4.2" lengthAdjust="spacingAndGlyphs">1</text><text x="26.8" y="428.16" font-size="5.4" fill="#a4a4a4" textLength="4.2" lengthAdjust="spacingAndGlyphs">6</text><text x="26.8" y="433.66" font-size="5.4" fill="#a4a4a4" textLength="4.2" lengthAdjust="spacingAndGlyphs">0</text><text x="26.8" y="439.16" font-size="5.4" fill="#a4a4a4" textLength="4.2" lengthAdjust="spacingAndGlyphs">0</text><text x="26.8" y="451.43" font-size="5.4" fill="#a4a4a4" textLength="4.2" lengthAdjust="spacingAndGlyphs">1</text><text x="26.8" y="456.93" font-size="5.4" fill="#a4a4a4" textLength="4.2" lengthAdjust="spacingAndGlyphs">8</text><text x="26.8" y="462.43" font-size="5.4" fill="#a4a4a4" textLength="4.2" lengthAdjust="spacingAndGlyphs">0</text><text x="26.8" y="467.93" font-size="5.4" fill="#a4a4a4" textLength="4.2" lengthAdjust="spacingAndGlyphs">0</text><text x="26.8" y="480.20" font-size="5.4" fill="#a4a4a4" textLength="4.2" lengthAdjust="spacingAndGlyphs">2</text><text x="26.8" y="485.70" font-size="5.4" fill="#a4a4a4" textLength="4.2" lengthAdjust="spacingAndGlyphs">0</text><text x="26.8" y="491.20" font-size="5.4" fill="#a4a4a4" textLength="4.2" lengthAdjust="spacingAndGlyphs">0</text><text x="26.8" y="496.70" font-size="5.4" fill="#a4a4a4" textLength="4.2" lengthAdjust="spacingAndGlyphs">0</text><text x="26.8" y="508.97" font-size="5.4" fill="#a4a4a4" textLength="4.2" lengthAdjust="spacingAndGlyphs">2</text><text x="26.8" y="514.47" font-size="5.4" fill="#a4a4a4" textLength="4.2" lengthAdjust="spacingAndGlyphs">2</text><text x="26.8" y="519.97" font-size="5.4" fill="#a4a4a4" textLength="4.2" lengthAdjust="spacingAndGlyphs">0</text><text x="26.8" y="525.47" font-size="5.4" fill="#a4a4a4" textLength="4.2" lengthAdjust="spacingAndGlyphs">0</text><text x="26.8" y="537.74" font-size="5.4" fill="#a4a4a4" textLength="4.2" lengthAdjust="spacingAndGlyphs">2</text><text x="26.8" y="543.24" font-size="5.4" fill="#a4a4a4" textLength="4.2" lengthAdjust="spacingAndGlyphs">4</text><text x="26.8" y="548.74" font-size="5.4" fill="#a4a4a4" textLength="4.2" lengthAdjust="spacingAndGlyphs">0</text><text x="26.8" y="554.24" font-size="5.4" fill="#a4a4a4" textLength="4.2" lengthAdjust="spacingAndGlyphs">0</text><text x="26.8" y="566.51" font-size="5.4" fill="#a4a4a4" textLength="4.2" lengthAdjust="spacingAndGlyphs">2</text><text x="26.8" y="572.01" font-size="5.4" fill="#a4a4a4" textLength="4.2" lengthAdjust="spacingAndGlyphs">6</text><text x="26.8" y="577.51" font-size="5.4" fill="#a4a4a4" textLength="4.2" lengthAdjust="spacingAndGlyphs">0</text><text x="26.8" y="583.01" font-size="5.4" fill="#a4a4a4" textLength="4.2" lengthAdjust="spacingAndGlyphs">0</text><text x="26.8" y="595.28" font-size="5.4" fill="#a4a4a4" textLength="4.2" lengthAdjust="spacingAndGlyphs">2</text><text x="26.8" y="600.78" font-size="5.4" fill="#a4a4a4" textLength="4.2" lengthAdjust="spacingAndGlyphs">8</text><text x="26.8" y="606.28" font-size="5.4" fill="#a4a4a4" textLength="4.2" lengthAdjust="spacingAndGlyphs">0</text><text x="26.8" y="611.78" font-size="5.4" fill="#a4a4a4" textLength="4.2" lengthAdjust="spacingAndGlyphs">0</text><text x="26.8" y="624.05" font-size="5.4" fill="#a4a4a4" textLength="4.2" lengthAdjust="spacingAndGlyphs">3</text><text x="26.8" y="629.55" font-size="5.4" fill="#a4a4a4" textLength="4.2" lengthAdjust="spacingAndGlyphs">0</text><text x="26.8" y="635.05" font-size="5.4" fill="#a4a4a4" textLength="4.2" lengthAdjust="spacingAndGlyphs">0</text><text x="26.8" y="640.55" font-size="5.4" fill="#a4a4a4" textLength="4.2" lengthAdjust="spacingAndGlyphs">0</text><text x="26.8" y="652.82" font-size="5.4" fill="#a4a4a4" textLength="4.2" lengthAdjust="spacingAndGlyphs">3</text><text x="26.8" y="658.32" font-size="5.4" fill="#a4a4a4" textLength="4.2" lengthAdjust="spacingAndGlyphs">2</text><text x="26.8" y="663.82" font-size="5.4" fill="#a4a4a4" textLength="4.2" lengthAdjust="spacingAndGlyphs">0</text><text x="26.8" y="669.32" font-size="5.4" fill="#a4a4a4" textLength="4.2" lengthAdjust="spacingAndGlyphs">0</text><text x="26.8" y="681.59" font-size="5.4" fill="#a4a4a4" textLength="4.2" lengthAdjust="spacingAndGlyphs">3</text><text x="26.8" y="687.09" font-size="5.4" fill="#a4a4a4" textLength="4.2" lengthAdjust="spacingAndGlyphs">4</text><text x="26.8" y="692.59" font-size="5.4" fill="#a4a4a4" textLength="4.2" lengthAdjust="spacingAndGlyphs">0</text><text x="26.8" y="698.09" font-size="5.4" fill="#a4a4a4" textLength="4.2" lengthAdjust="spacingAndGlyphs">0</text><text x="26.8" y="710.36" font-size="5.4" fill="#a4a4a4" textLength="4.2" lengthAdjust="spacingAndGlyphs">3</text><text x="26.8" y="715.86" font-size="5.4" fill="#a4a4a4" textLength="4.2" lengthAdjust="spacingAndGlyphs">6</text><rect x="34.40" y="79.01" width="2" height="0.8" fill="#5c5c5c"/><rect x="33.20" y="86.21" width="3.2" height="0.8" fill="#5c5c5c"/><rect x="34.40" y="93.40" width="2" height="0.8" fill="#5c5c5c"/><rect x="34.40" y="107.78" width="2" height="0.8" fill="#5c5c5c"/><rect x="33.20" y="114.98" width="3.2" height="0.8" fill="#5c5c5c"/><rect x="34.40" y="122.17" width="2" height="0.8" fill="#5c5c5c"/><rect x="34.40" y="136.55" width="2" height="0.8" fill="#5c5c5c"/><rect x="33.20" y="143.75" width="3.2" height="0.8" fill="#5c5c5c"/><rect x="34.40" y="150.94" width="2" height="0.8" fill="#5c5c5c"/><rect x="34.40" y="165.32" width="2" height="0.8" fill="#5c5c5c"/><rect x="33.20" y="172.52" width="3.2" height="0.8" fill="#5c5c5c"/><rect x="34.40" y="179.71" width="2" height="0.8" fill="#5c5c5c"/><rect x="34.40" y="194.09" width="2" height="0.8" fill="#5c5c5c"/><rect x="33.20" y="201.28" width="3.2" height="0.8" fill="#5c5c5c"/><rect x="34.40" y="208.48" width="2" height="0.8" fill="#5c5c5c"/><rect x="34.40" y="222.86" width="2" height="0.8" fill="#5c5c5c"/><rect x="33.20" y="230.06" width="3.2" height="0.8" fill="#5c5c5c"/><rect x="34.40" y="237.25" width="2" height="0.8" fill="#5c5c5c"/><rect x="34.40" y="251.63" width="2" height="0.8" fill="#5c5c5c"/><rect x="33.20" y="258.82" width="3.2" height="0.8" fill="#5c5c5c"/><rect x="34.40" y="266.02" width="2" height="0.8" fill="#5c5c5c"/><rect x="34.40" y="280.40" width="2" height="0.8" fill="#5c5c5c"/><rect x="33.20" y="287.60" width="3.2" height="0.8" fill="#5c5c5c"/><rect x="34.40" y="294.79" width="2" height="0.8" fill="#5c5c5c"/><rect x="34.40" y="309.17" width="2" height="0.8" fill="#5c5c5c"/><rect x="33.20" y="316.37" width="3.2" height="0.8" fill="#5c5c5c"/><rect x="34.40" y="323.56" width="2" height="0.8" fill="#5c5c5c"/><rect x="34.40" y="337.94" width="2" height="0.8" fill="#5c5c5c"/><rect x="33.20" y="345.13" width="3.2" height="0.8" fill="#5c5c5c"/><rect x="34.40" y="352.33" width="2" height="0.8" fill="#5c5c5c"/><rect x="34.40" y="366.71" width="2" height="0.8" fill="#5c5c5c"/><rect x="33.20" y="373.90" width="3.2" height="0.8" fill="#5c5c5c"/><rect x="34.40" y="381.10" width="2" height="0.8" fill="#5c5c5c"/><rect x="34.40" y="395.48" width="2" height="0.8" fill="#5c5c5c"/><rect x="33.20" y="402.68" width="3.2" height="0.8" fill="#5c5c5c"/><rect x="34.40" y="409.87" width="2" height="0.8" fill="#5c5c5c"/><rect x="34.40" y="424.25" width="2" height="0.8" fill="#5c5c5c"/><rect x="33.20" y="431.44" width="3.2" height="0.8" fill="#5c5c5c"/><rect x="34.40" y="438.64" width="2" height="0.8" fill="#5c5c5c"/><rect x="34.40" y="453.02" width="2" height="0.8" fill="#5c5c5c"/><rect x="33.20" y="460.22" width="3.2" height="0.8" fill="#5c5c5c"/><rect x="34.40" y="467.41" width="2" height="0.8" fill="#5c5c5c"/><rect x="34.40" y="481.79" width="2" height="0.8" fill="#5c5c5c"/><rect x="33.20" y="488.99" width="3.2" height="0.8" fill="#5c5c5c"/><rect x="34.40" y="496.18" width="2" height="0.8" fill="#5c5c5c"/><rect x="34.40" y="510.56" width="2" height="0.8" fill="#5c5c5c"/><rect x="33.20" y="517.75" width="3.2" height="0.8" fill="#5c5c5c"/><rect x="34.40" y="524.95" width="2" height="0.8" fill="#5c5c5c"/><rect x="34.40" y="539.33" width="2" height="0.8" fill="#5c5c5c"/><rect x="33.20" y="546.52" width="3.2" height="0.8" fill="#5c5c5c"/><rect x="34.40" y="553.72" width="2" height="0.8" fill="#5c5c5c"/><rect x="34.40" y="568.10" width="2" height="0.8" fill="#5c5c5c"/><rect x="33.20" y="575.29" width="3.2" height="0.8" fill="#5c5c5c"/><rect x="34.40" y="582.49" width="2" height="0.8" fill="#5c5c5c"/><rect x="34.40" y="596.87" width="2" height="0.8" fill="#5c5c5c"/><rect x="33.20" y="604.07" width="3.2" height="0.8" fill="#5c5c5c"/><rect x="34.40" y="611.26" width="2" height="0.8" fill="#5c5c5c"/><rect x="34.40" y="625.64" width="2" height="0.8" fill="#5c5c5c"/><rect x="33.20" y="632.84" width="3.2" height="0.8" fill="#5c5c5c"/><rect x="34.40" y="640.03" width="2" height="0.8" fill="#5c5c5c"/><rect x="34.40" y="654.41" width="2" height="0.8" fill="#5c5c5c"/><rect x="33.20" y="661.61" width="3.2" height="0.8" fill="#5c5c5c"/><rect x="34.40" y="668.80" width="2" height="0.8" fill="#5c5c5c"/><rect x="34.40" y="683.18" width="2" height="0.8" fill="#5c5c5c"/><rect x="33.20" y="690.38" width="3.2" height="0.8" fill="#5c5c5c"/><rect x="34.40" y="697.57" width="2" height="0.8" fill="#5c5c5c"/><rect x="34.40" y="711.95" width="2" height="0.8" fill="#5c5c5c"/></svg>
<div class="a" style="left:36.4px;top:72.8px;width:822px;height:639px;background:#333333"></div>
<svg style="left:0;top:0" width="1080" height="720" viewBox="0 0 1080 720"><defs>
<pattern id="chk" x="304" y="187" width="10" height="11" patternUnits="userSpaceOnUse"><rect width="10" height="11" fill="#ffffff"/><rect x="5" y="0" width="5" height="5.5" fill="#cecece"/><rect x="0" y="5.5" width="5" height="5.5" fill="#cecece"/></pattern>
<linearGradient id="pg" x1="0" y1="0" x2="0" y2="1"><stop offset="0" stop-color="#d5c5a8"/><stop offset="0.35" stop-color="#d2c2a5"/><stop offset="0.5" stop-color="#cbbb9e"/><stop offset="0.545" stop-color="#c2b396"/><stop offset="0.585" stop-color="#b7a98d"/><stop offset="0.615" stop-color="#b0a387"/><stop offset="0.7" stop-color="#ac9f84"/><stop offset="0.85" stop-color="#a3967c"/><stop offset="1" stop-color="#9d9076"/></linearGradient><linearGradient id="pgh" x1="0" y1="0" x2="1" y2="0"><stop offset="0" stop-color="#6a5a40" stop-opacity="0"/><stop offset="0.4" stop-color="#6a5a40" stop-opacity="0.05"/><stop offset="1" stop-color="#6a5a40" stop-opacity="0.2"/></linearGradient>
<filter id="paperf" x="0" y="0" width="100%" height="100%" color-interpolation-filters="sRGB">
 <feTurbulence type="fractalNoise" baseFrequency="0.6" numOctaves="2" seed="7" result="n"/>
 <feColorMatrix in="n" type="matrix" values="1 0 0 0 0  1 0 0 0 0  1 0 0 0 0  0 0 0 0 1" result="g"/>
 <feComposite in="SourceGraphic" in2="g" operator="arithmetic" k1="0" k2="1" k3="0.17" k4="-0.085" result="c"/>
 <feComposite in="c" in2="SourceGraphic" operator="in"/>
</filter>
<filter id="denf" filterUnits="userSpaceOnUse" x="600" y="164" width="82" height="392" color-interpolation-filters="sRGB">
 <feTurbulence type="fractalNoise" baseFrequency="0.5 0.5" numOctaves="2" seed="5" result="n"/>
 <feColorMatrix in="n" type="matrix" values="1 0 0 0 0  1 0 0 0 0  1 0 0 0 0  0 0 0 0 1" result="g"/>
 <feComposite in="SourceGraphic" in2="g" operator="arithmetic" k1="0" k2="1" k3="0.4" k4="-0.2" result="c"/>
 <feComposite in="c" in2="SourceGraphic" operator="in"/>
</filter>
<linearGradient id="dsh" x1="0" y1="0" x2="1" y2="0"><stop offset="0" stop-color="#14161a" stop-opacity="0.4"/><stop offset="0.2" stop-color="#14161a" stop-opacity="0.15"/><stop offset="0.5" stop-color="#14161a" stop-opacity="0"/><stop offset="1" stop-color="#14161a" stop-opacity="0.05"/></linearGradient>
<linearGradient id="dsv" x1="0" y1="0" x2="0" y2="1"><stop offset="0" stop-color="#16181c" stop-opacity="0"/><stop offset="0.5" stop-color="#16181c" stop-opacity="0.1"/><stop offset="0.7" stop-color="#16181c" stop-opacity="0.26"/><stop offset="1" stop-color="#16181c" stop-opacity="0.32"/></linearGradient>
<linearGradient id="dfold" x1="0" y1="0" x2="1" y2="0"><stop offset="0" stop-color="#0d0e11" stop-opacity="0.4"/><stop offset="0.22" stop-color="#0d0e11" stop-opacity="0.3"/><stop offset="0.4" stop-color="#0d0e11" stop-opacity="0"/><stop offset="1" stop-color="#0d0e11" stop-opacity="0"/></linearGradient>
<filter id="speck" x="0" y="0" width="100%" height="100%" color-interpolation-filters="sRGB"><feTurbulence type="fractalNoise" baseFrequency="0.5 0.35" numOctaves="2" seed="21" result="n"/><feColorMatrix in="n" type="matrix" values="0 0 0 0 0.36  0 0 0 0 0.3  0 0 0 0 0.2  3 0 0 0 -1.62" result="a"/><feComposite in="a" in2="SourceGraphic" operator="in"/></filter>
<filter id="sblur" x="-50%" y="-10%" width="200%" height="120%"><feGaussianBlur stdDeviation="2.5"/></filter>
<clipPath id="papclip"><polygon points="399,165 600.7,165 604,554.4 399,554.4"/></clipPath>
<clipPath id="denclip"><polygon points="600.7,165 681,165 681,554.4 604,554.4"/></clipPath>
<clipPath id="cvclip"><rect x="36.4" y="72.8" width="822" height="639"/></clipPath>
</defs>
<g clip-path="url(#cvclip)">
<rect x="322.9" y="72.8" width="1.5" height="639" fill="#64939a"/><rect x="324.4" y="72.8" width="0.9" height="639" fill="#1b3a3e"/>
<rect x="572.4" y="72.8" width="1.5" height="639" fill="#64939a"/><rect x="573.9" y="72.8" width="0.9" height="639" fill="#1b3a3e"/>
<rect x="36.4" y="209.6" width="822" height="1.5" fill="#64939a"/><rect x="36.4" y="208.6" width="822" height="1" fill="#1b3a3e"/>
<rect x="36.4" y="574.2" width="822" height="1.5" fill="#64939a"/><rect x="36.4" y="573.2" width="822" height="1" fill="#1b3a3e"/>
<rect x="304" y="187" width="289" height="410.5" fill="url(#chk)"/>
<rect x="321.5" y="187" width="4.3" height="410.5" fill="#7fe6ee" opacity="0.36"/>
<rect x="571.0" y="187" width="4.3" height="410.5" fill="#7fe6ee" opacity="0.36"/>
<rect x="304" y="207.79999999999998" width="289" height="4.5" fill="#7fe6ee" opacity="0.36"/>
<rect x="304" y="572.4000000000001" width="289" height="4.5" fill="#7fe6ee" opacity="0.36"/>
<polygon points="399,165 600.7,165 604,554.4 399,554.4" fill="url(#pg)" filter="url(#paperf)"/>
<polygon points="399,165 600.7,165 604,554.4 399,554.4" fill="url(#pgh)"/>
<polygon points="399,165 600.7,165 604,554.4 399,554.4" fill="#000" filter="url(#speck)" opacity="0.3"/>
<polygon points="594.6,165 600.7,165 604,554.4 597.9,554.4" fill="#d4a27a" opacity="0.16"/>
<path d="M533 165 C535 195 540 225 546 255 L556 255 C548 225 543 195 541 165 Z" fill="#8d7c62" opacity="0.16" filter="url(#sblur)"/>
<g clip-path="url(#papclip)"><path d="M397 440.4 C402 438.4 412.4 439.6 412 446.4 C411.6 452.6 405 455.4 397 458.4 Z" fill="#2f2c28"/><path d="M397 467 C404 466.6 411.4 461 418.8 451.2" fill="none" stroke="#2f2c28" stroke-width="5" stroke-linecap="round"/><circle cx="405.2" cy="446" r="1" fill="#8f897c"/></g>
<g clip-path="url(#denclip)"><g filter="url(#denf)"><polygon points="600.7,165 681,165 681,554.4 604,554.4" fill="#1c1f27"/><path d="M269.95 554.4L596.70 165M273.45 554.4L600.20 165M276.95 554.4L603.70 165M280.45 554.4L607.20 165M283.95 554.4L610.70 165M287.45 554.4L614.20 165M290.95 554.4L617.70 165M294.45 554.4L621.20 165M297.95 554.4L624.70 165M301.45 554.4L628.20 165M304.95 554.4L631.70 165M308.45 554.4L635.20 165M311.95 554.4L638.70 165M315.45 554.4L642.20 165M318.95 554.4L645.70 165M322.45 554.4L649.20 165M325.95 554.4L652.70 165M329.45 554.4L656.20 165M332.95 554.4L659.70 165M336.45 554.4L663.20 165M339.95 554.4L666.70 165M343.45 554.4L670.20 165M346.95 554.4L673.70 165M350.45 554.4L677.20 165M353.95 554.4L680.70 165M357.45 554.4L684.20 165M360.95 554.4L687.70 165M364.45 554.4L691.20 165M367.95 554.4L694.70 165M371.45 554.4L698.20 165M374.95 554.4L701.70 165M378.45 554.4L705.20 165M381.95 554.4L708.70 165M385.45 554.4L712.20 165M388.95 554.4L715.70 165M392.45 554.4L719.20 165M395.95 554.4L722.70 165M399.45 554.4L726.20 165M402.95 554.4L729.70 165M406.45 554.4L733.20 165M409.95 554.4L736.70 165M413.45 554.4L740.20 165M416.95 554.4L743.70 165M420.45 554.4L747.20 165M423.95 554.4L750.70 165M427.45 554.4L754.20 165M430.95 554.4L757.70 165M434.45 554.4L761.20 165M437.95 554.4L764.70 165M441.45 554.4L768.20 165M444.95 554.4L771.70 165M448.45 554.4L775.20 165M451.95 554.4L778.70 165M455.45 554.4L782.20 165M458.95 554.4L785.70 165M462.45 554.4L789.20 165M465.95 554.4L792.70 165M469.45 554.4L796.20 165M472.95 554.4L799.70 165M476.45 554.4L803.20 165M479.95 554.4L806.70 165M483.45 554.4L810.20 165M486.95 554.4L813.70 165M490.45 554.4L817.20 165M493.95 554.4L820.70 165M497.45 554.4L824.20 165M500.95 554.4L827.70 165M504.45 554.4L831.20 165M507.95 554.4L834.70 165M511.45 554.4L838.20 165M514.95 554.4L841.70 165M518.45 554.4L845.20 165M521.95 554.4L848.70 165M525.45 554.4L852.20 165M528.95 554.4L855.70 165M532.45 554.4L859.20 165M535.95 554.4L862.70 165M539.45 554.4L866.20 165M542.95 554.4L869.70 165M546.45 554.4L873.20 165M549.95 554.4L876.70 165M553.45 554.4L880.20 165M556.95 554.4L883.70 165M560.45 554.4L887.20 165M563.95 554.4L890.70 165M567.45 554.4L894.20 165M570.95 554.4L897.70 165M574.45 554.4L901.20 165M577.95 554.4L904.70 165M581.45 554.4L908.20 165M584.95 554.4L911.70 165M588.45 554.4L915.20 165M591.95 554.4L918.70 165M595.45 554.4L922.20 165M598.95 554.4L925.70 165M602.45 554.4L929.20 165M605.95 554.4L932.70 165M609.45 554.4L936.20 165M612.95 554.4L939.70 165M616.45 554.4L943.20 165M619.95 554.4L946.70 165M623.45 554.4L950.20 165M626.95 554.4L953.70 165M630.45 554.4L957.20 165M633.95 554.4L960.70 165M637.45 554.4L964.20 165M640.95 554.4L967.70 165M644.45 554.4L971.20 165M647.95 554.4L974.70 165M651.45 554.4L978.20 165M654.95 554.4L981.70 165M658.45 554.4L985.20 165M661.95 554.4L988.70 165M665.45 554.4L992.20 165M668.95 554.4L995.70 165M672.45 554.4L999.20 165M675.95 554.4L1002.70 165M679.45 554.4L1006.20 165" stroke="#9097a3" stroke-width="1.45" fill="none"/></g></g>
<polygon points="600.7,165 681,165 681,554.4 604,554.4" fill="url(#dsh)"/>
<polygon points="600.7,165 681,165 681,554.4 604,554.4" fill="url(#dsv)"/>
<rect x="602" y="395" width="79" height="160" fill="url(#dfold)"/>
</g></svg>
<svg class="tx" style="left:0;top:0" width="1080" height="720" viewBox="0 0 1080 720"><defs>
<clipPath id="cc"><rect x="473.4" y="303.2" width="145.8" height="93.4" rx="4.2"/></clipPath>
<linearGradient id="cl" x1="0" y1="0" x2="1" y2="0"><stop offset="0" stop-color="#eda6dc"/><stop offset="0.3" stop-color="#ee9ad4"/><stop offset="0.62" stop-color="#e170d4"/><stop offset="0.85" stop-color="#d47ad8"/><stop offset="1" stop-color="#c58de2"/></linearGradient>
<linearGradient id="cl2" x1="0" y1="0" x2="1" y2="1"><stop offset="0" stop-color="#d98ae0"/><stop offset="1" stop-color="#f6a892"/></linearGradient>
<linearGradient id="cr" x1="0" y1="0" x2="1" y2="1"><stop offset="0" stop-color="#e3a6e6"/><stop offset="0.45" stop-color="#efa5cf"/><stop offset="1" stop-color="#f6b69a"/></linearGradient>
<linearGradient id="chip" x1="0" y1="0" x2="1" y2="1"><stop offset="0" stop-color="#ececea"/><stop offset="0.5" stop-color="#b4b4b0"/><stop offset="1" stop-color="#deded9"/></linearGradient>
<filter id="csh" x="-10%" y="-10%" width="120%" height="125%"><feGaussianBlur stdDeviation="1.6"/></filter>
<filter id="bl2" x="-20%" y="-20%" width="140%" height="140%"><feGaussianBlur stdDeviation="1.8"/></filter>
<filter id="bl1" x="-20%" y="-20%" width="140%" height="140%"><feGaussianBlur stdDeviation="1"/></filter>
</defs>
<rect x="472.6" y="304.6" width="146.6" height="94" rx="5" fill="#4a3c28" opacity="0.45" filter="url(#csh)"/>
<g clip-path="url(#cc)">
<rect x="473" y="303" width="73" height="94" fill="url(#cl)"/>
<rect x="545.8" y="303" width="74" height="94" fill="url(#cl2)"/>
<g filter="url(#bl2)">
<path d="M473 345 C486 330 500 322 512 306 L522 303 C516 322 504 338 488 350 L473 360 Z" fill="#f6c3c8" opacity="0.75"/>
<path d="M473 342 C482 340 492 346 498 356 C502 364 498 370 490 372 C482 372 476 366 473 362 Z" fill="#f28562"/>
<ellipse cx="494" cy="378" rx="10" ry="7.5" fill="#f1dc58"/>
<ellipse cx="480" cy="376" rx="7" ry="9" fill="#f597b4"/>
<path d="M498 350 C510 344 522 352 534 362 C548 368 566 366 590 360 C584 378 560 392 532 391 C514 388 502 374 498 350 Z" fill="#f5a9c8"/>
<path d="M508 360 C520 352 530 362 540 368 C550 372 560 371 574 368 C562 384 542 389 526 385 C514 380 510 372 508 360 Z" fill="#a9dcc0"/>
<path d="M505 352 C514 352 524 358 532 366 L522 370 C514 366 508 360 505 352 Z" fill="#7462a8"/>
<path d="M500 362 C506 372 516 382 530 390 L508 394 C502 384 498 372 500 362 Z" fill="#f3a074"/>
<ellipse cx="560" cy="391" rx="24" ry="5" fill="#f4a0c4"/>
<ellipse cx="500" cy="393" rx="24" ry="4" fill="#f292ba"/>
</g>
<path d="M473 303 L481 303 L481 397 L473 397 Z" fill="#c98ae6" opacity="0.55" filter="url(#bl2)"/>
<rect x="545.8" y="303" width="74" height="94" fill="url(#cr)" opacity="0.74"/>
<path d="M546 364 C566 356 590 353 619 358 L619 366 C594 361 568 364 546 374 Z" fill="#fbd3e4" opacity="0.35" filter="url(#bl1)"/>
</g>
<rect x="481.8" y="327.6" width="21.4" height="15.8" rx="2.6" fill="url(#chip)" stroke="#9a9a94" stroke-width="0.5"/>
<path d="M481.8 332.8 H488.4 M481.8 338.2 H488.4 M496.6 332.8 H503.2 M496.6 338.2 H503.2 M488.4 327.6 C490.4 331 490.4 340 488.4 343.4 M496.6 327.6 C494.6 331 494.6 340 496.6 343.4" fill="none" stroke="#84847e" stroke-width="0.6"/>
<path d="M509.2 333.6 A4 4 0 0 1 509.2 339 M511.6 332.4 A6 6 0 0 1 511.6 340.2 M514 331.2 A8 8 0 0 1 514 341.4" fill="none" stroke="#fbf4fb" stroke-width="1.1" stroke-linecap="round"/>
<path d="M559.4 316.4 L566.4 311.8 L565 315 L574.6 310.6 L567.6 316.4 L569.8 316 L564.6 323.4 L565.4 318.6 L561.4 320.4 L563.2 316.8 Z" fill="#2f63b8"/>
<path d="M566.4 311.8 L574.6 310.6 L567.6 314.6 Z" fill="#7fcf6a"/>
<path d="M559.4 316.4 L566.4 311.8 L564.4 316 Z" fill="#27b0b0"/>
<text x="569.8" y="326.9" font-family="Liberation Sans, sans-serif" font-size="11" fill="#2c2a68" textLength="42.8" lengthAdjust="spacingAndGlyphs">Together</text>
<text x="589" y="330.3" font-family="Liberation Sans, sans-serif" font-size="2.6" font-weight="bold" fill="#3f9f5a" textLength="21.6" lengthAdjust="spacingAndGlyphs">CREDIT UNION</text>
<text x="487.9" y="365.7" font-family="Liberation Mono, monospace" font-size="8.6" fill="#fff" opacity="0.55" textLength="21.4" lengthAdjust="spacingAndGlyphs">1234</text><text x="487.4" y="365.2" font-family="Liberation Mono, monospace" font-size="8.6" fill="#8f7f95" opacity="0.85" textLength="21.4" lengthAdjust="spacingAndGlyphs">1234</text>
<text x="520.1" y="365.7" font-family="Liberation Mono, monospace" font-size="8.6" fill="#fff" opacity="0.55" textLength="21.4" lengthAdjust="spacingAndGlyphs">5678</text><text x="519.6" y="365.2" font-family="Liberation Mono, monospace" font-size="8.6" fill="#8f7f95" opacity="0.85" textLength="21.4" lengthAdjust="spacingAndGlyphs">5678</text>
<text x="553.9" y="365.7" font-family="Liberation Mono, monospace" font-size="8.6" fill="#fff" opacity="0.55" textLength="21.4" lengthAdjust="spacingAndGlyphs">9012</text><text x="553.4" y="365.2" font-family="Liberation Mono, monospace" font-size="8.6" fill="#8f7f95" opacity="0.85" textLength="21.4" lengthAdjust="spacingAndGlyphs">9012</text>
<text x="586.3" y="365.7" font-family="Liberation Mono, monospace" font-size="8.6" fill="#fff" opacity="0.55" textLength="21.4" lengthAdjust="spacingAndGlyphs">3456</text><text x="585.8" y="365.2" font-family="Liberation Mono, monospace" font-size="8.6" fill="#8f7f95" opacity="0.85" textLength="21.4" lengthAdjust="spacingAndGlyphs">3456</text>
<text x="524.6" y="372.4" font-family="Liberation Sans, sans-serif" font-size="2.4" fill="#6f8f7a" textLength="14" lengthAdjust="spacingAndGlyphs">VALID FROM</text>
<text x="550.4" y="372.4" font-family="Liberation Sans, sans-serif" font-size="2.4" fill="#7a6f95" textLength="16" lengthAdjust="spacingAndGlyphs">EXPIRES END</text>
<text x="524.7" y="379.7" font-family="Liberation Mono, monospace" font-size="6.8" fill="#fff" opacity="0.55" textLength="18.6" lengthAdjust="spacingAndGlyphs">07/21</text><text x="524.2" y="379.2" font-family="Liberation Mono, monospace" font-size="6.8" fill="#6f7f78" opacity="0.85" textLength="18.6" lengthAdjust="spacingAndGlyphs">07/21</text>
<text x="550.7" y="379.7" font-family="Liberation Mono, monospace" font-size="6.8" fill="#fff" opacity="0.55" textLength="18.2" lengthAdjust="spacingAndGlyphs">07/26</text><text x="550.2" y="379.2" font-family="Liberation Mono, monospace" font-size="6.8" fill="#7f7590" opacity="0.85" textLength="18.2" lengthAdjust="spacingAndGlyphs">07/26</text>
<text x="482.3" y="390.1" font-family="Liberation Mono, monospace" font-size="5.6" fill="#fff" opacity="0.55" textLength="46" lengthAdjust="spacingAndGlyphs">JOHN R TAYLOR</text><text x="481.8" y="389.6" font-family="Liberation Mono, monospace" font-size="5.6" fill="#b08a8a" opacity="0.8" textLength="46" lengthAdjust="spacingAndGlyphs">JOHN R TAYLOR</text>
<text x="585.4" y="386" font-family="Liberation Sans, sans-serif" font-size="11.4" font-weight="bold" font-style="italic" fill="#fdf8fb" textLength="26.6" lengthAdjust="spacingAndGlyphs">VISA</text>
<text x="594.6" y="391.9" font-family="Liberation Sans, sans-serif" font-size="4.6" fill="#fdf4f6" textLength="16.2" lengthAdjust="spacingAndGlyphs">Classic</text>
<rect x="473.4" y="303.2" width="145.8" height="93.4" rx="4.2" fill="none" stroke="#f6d0e0" stroke-width="0.5" opacity="0.7"/></svg>
<div class="a" style="left:24px;top:711.7px;width:834.4px;height:9px;background:#424242"></div>
<div class="a" style="left:56px;top:711.7px;width:111px;height:9px;background:#4a4a4a"></div>
<svg style="left:164px;top:714.6px" width="4" height="6" viewBox="0 0 4 6" ><path d="M0.6 0.4 L3.2 3 L0.6 5.6" fill="none" stroke="#bdbdbd" stroke-width="0.9"/></svg>
<div class="a" style="left:858.4px;top:40px;width:222px;height:680px;background:#424242"></div>
<div class="a" style="left:871px;top:49px;width:23.6px;height:671px;background:#4a4a4a"></div>
<div class="a" style="left:871px;top:49px;width:23.6px;height:153px;background:#535353"></div>
<svg style="left:886px;top:42.8px" width="4.6" height="3.8" viewBox="0 0 4.6 3.8" ><path d="M1.8 0.3 L0.5 1.9 L1.8 3.5 M4.1 0.3 L2.8 1.9 L4.1 3.5" fill="none" stroke="#e0e0e0" stroke-width="1.1"/></svg>
<svg style="left:1066.8px;top:42.8px" width="4.6" height="3.8" viewBox="0 0 4.6 3.8" ><path d="M0.5 0.3 L1.8 1.9 L0.5 3.5 M2.8 0.3 L4.1 1.9 L2.8 3.5" fill="none" stroke="#e0e0e0" stroke-width="1.1"/></svg>
<div class="a" style="left:875px;top:51.5px;width:15px;height:1px;background:#484848"></div>
<div class="a" style="left:875px;top:98.5px;width:15px;height:1px;background:#484848"></div>
<div class="a" style="left:875px;top:148px;width:15px;height:1px;background:#484848"></div>
<div class="a" style="left:875px;top:176.5px;width:15px;height:1px;background:#484848"></div>
<div class="a" style="left:871px;top:96.7px;width:23.6px;height:1px;background:#454545"></div>
<div class="a" style="left:871px;top:146px;width:23.6px;height:1px;background:#454545"></div>
<div class="a" style="left:871px;top:174.6px;width:23.6px;height:1px;background:#454545"></div>
<div class="a" style="left:871px;top:202px;width:23.6px;height:1px;background:#454545"></div>
<svg style="left:876px;top:57px" width="14" height="13" viewBox="0 0 14 13" ><path d="M0.6 1.2 H4.6 M0.6 3.2 H3.8 M0.6 5.2 H3" stroke="#dedede" stroke-width="0.9"/><path d="M12.6 0.8 L13.4 1.6 L7.2 8.6 L5.8 7.2 Z" fill="#dedede"/><path d="M5.2 7.8 L6.6 9.2 C6.2 11.4 4 12 2.4 11.6 C3.6 11 3.6 8.8 5.2 7.8 Z" fill="#dedede"/></svg>
<svg style="left:876.4px;top:79px" width="13" height="11" viewBox="0 0 13 11" ><path d="M0.4 2.4 H12.4 M0.4 8 H12.4" stroke="#dedede" stroke-width="1.1"/><path d="M1.8 0.6 L5.4 2.4 L1.8 4.2 Z" fill="#dedede"/><path d="M12 4.8 V11 L7 8 Z" fill="#dedede"/></svg>
<div class="a" style="left:887px;top:107.4px;width:1.1px;height:12.6px;background:#dedede"></div>
<svg style="left:877.6px;top:182.8px" width="11.4" height="12.6" viewBox="0 0 11.4 12.6" ><path d="M5.7 0.6 L10.8 3.4 V9.2 L5.7 12 L0.6 9.2 V3.4 Z M0.6 3.4 L5.7 6.2 L10.8 3.4 M5.7 6.2 V12" fill="none" stroke="#dedede" stroke-width="1"/></svg>
<div class="a" style="left:895.6px;top:49px;width:179.8px;height:336px;background:#535353"></div>
<div class="a" style="left:895.6px;top:49px;width:179.8px;height:19px;background:#424242"></div>
<div class="a" style="left:1009.4px;top:49.2px;width:40.6px;height:19px;background:#535353"></div>
<svg style="left:1062.6px;top:55.8px" width="6.4" height="5" viewBox="0 0 6.4 5" ><path d="M0 0.6 H6.4 M0 2.5 H6.4 M0 4.4 H6.4" stroke="#cfcfcf" stroke-width="0.9"/></svg>
<div class="a" style="left:1075.4px;top:49px;width:1.2px;height:671px;background:#3a3a3a"></div>
<div class="a" style="left:1076.6px;top:49px;width:3.4px;height:671px;background:#4d4d4d"></div>
<div class="a" style="left:903px;top:73.3px;width:13.6px;height:14.6px;background:#3a3a3a;border-radius:1px"></div>
<svg style="left:906px;top:75.8px" width="7.6" height="9.6" viewBox="0 0 7.6 9.6" ><path d="M0.6 0.6 H4.6 L7 3 V9 H0.6 Z M4.4 0.6 V3.2 H7" fill="none" stroke="#e6e6e6" stroke-width="1"/></svg>
<div class="sep" style="left:895.6px;top:91.8px;width:170px"></div>
<svg style="left:901.8px;top:100.8px" width="5.6" height="3.6" viewBox="0 0 5.6 3.6" ><path d="M0.4 0.4 L2.8 3 L5.2 0.4" fill="none" stroke="#9a9a9a" stroke-width="0.9"/></svg>
<div class="dd" style="left:938.7px;top:115.1px;width:30.4px;height:9.2px"></div>
<div class="dd" style="left:938.7px;top:132.8px;width:30.4px;height:9.2px"></div>
<div class="dd" style="left:989.6px;top:115.1px;width:30.4px;height:9.2px;background:#4c4c4c"></div>
<div class="dd" style="left:989.6px;top:132.8px;width:30.4px;height:9.2px;background:#4c4c4c"></div>
<svg style="left:907.8px;top:122.8px" width="5.6" height="11.6" viewBox="0 0 5.6 11.6" ><rect x="0.8" y="0.6" width="4" height="4.4" rx="2" fill="none" stroke="#d8d8d8" stroke-width="1"/><rect x="0.8" y="6.6" width="4" height="4.4" rx="2" fill="none" stroke="#d8d8d8" stroke-width="1"/><path d="M2.8 3.4 V8.2" stroke="#d8d8d8" stroke-width="1"/></svg>
<div class="a" style="left:939.2px;top:151.6px;width:13.7px;height:15.2px;background:#353535;border-radius:1px"></div>
<svg style="left:942.2px;top:153.9px" width="8.4" height="10.6" viewBox="0 0 8.4 10.6" ><rect x="0.5" y="0.5" width="7.4" height="9.6" fill="none" stroke="#e8e8e8" stroke-width="1"/><circle cx="4.2" cy="3.5" r="1.3" fill="#e8e8e8"/><path d="M1.8 9.8 V7.2 C1.8 5.2 6.6 5.2 6.6 7.2 V9.8 Z" fill="#e8e8e8"/></svg>
<svg style="left:957px;top:154.8px" width="10.8" height="8.8" viewBox="0 0 10.8 8.8" ><rect x="0.5" y="0.5" width="9.8" height="7.8" fill="none" stroke="#e0e0e0" stroke-width="1"/><circle cx="5.4" cy="3" r="1.2" fill="#e0e0e0"/><path d="M3 8 V6.6 C3 4.8 7.8 4.8 7.8 6.6 V8 Z" fill="#e0e0e0"/></svg>
<div class="dd" style="left:939.2px;top:192.6px;width:81.4px;height:12.4px"></div>
<svg style="left:1014.4px;top:197.39999999999998px" width="5" height="3.4" viewBox="0 0 5 3.4" ><path d="M0.4 0.4 L2.5 2.8 L4.6 0.4" fill="none" stroke="#a4a4a4" stroke-width="0.9"/></svg>
<div class="dd" style="left:939.2px;top:209.4px;width:81.4px;height:12.8px"></div>
<svg style="left:1014.4px;top:214.4px" width="5" height="3.4" viewBox="0 0 5 3.4" ><path d="M0.4 0.4 L2.5 2.8 L4.6 0.4" fill="none" stroke="#a4a4a4" stroke-width="0.9"/></svg>
<div class="a" style="left:938.7px;top:227.8px;width:11.6px;height:12.2px;background:#565656;border:0.7px solid #474747"></div>
<div class="dd" style="left:953.2px;top:227.8px;width:67.4px;height:12.2px"></div>
<svg style="left:1014.4px;top:232.5px" width="5" height="3.4" viewBox="0 0 5 3.4" ><path d="M0.4 0.4 L2.5 2.8 L4.6 0.4" fill="none" stroke="#a4a4a4" stroke-width="0.9"/></svg>
<div class="sep" style="left:895.6px;top:247.2px;width:170px"></div>
<svg style="left:901.8px;top:255.8px" width="5.6" height="3.6" viewBox="0 0 5.6 3.6" ><path d="M0.4 0.4 L2.8 3 L5.2 0.4" fill="none" stroke="#9a9a9a" stroke-width="0.9"/></svg>
<div class="a" style="left:903.6px;top:269.8px;width:14.5px;height:16.4px;background:#353535;border-radius:1px"></div>
<svg style="left:905.8px;top:272.6px" width="10.2" height="10.8" viewBox="0 0 10.2 10.8" ><path d="M0.4 10.8 V0.4 H10.2 V3.2 H3.2 V10.8 Z" fill="#ececec"/></svg>
<svg style="left:925.8px;top:272.6px" width="11" height="11.4" viewBox="0 0 11 11.4" ><rect x="0.5" y="0.5" width="10" height="10.4" fill="none" stroke="#d8d8d8" stroke-width="0.9"/><path d="M3.8 0.5 V10.9 M7.2 0.5 V10.9 M0.5 3.9 H10.5 M0.5 7.5 H10.5" stroke="#d8d8d8" stroke-width="0.8"/></svg>
<svg style="left:946.6px;top:272.6px" width="10.6" height="11.4" viewBox="0 0 10.6 11.4" ><rect x="0.5" y="0.5" width="9.6" height="10.4" fill="none" stroke="#d8d8d8" stroke-width="0.9"/><rect x="2.6" y="2.6" width="5.4" height="6.2" fill="none" stroke="#bdbdbd" stroke-width="0.7" stroke-dasharray="1 0.8"/></svg>
<div class="dd" style="left:975.5px;top:272.4px;width:45.1px;height:11.8px"></div>
<svg style="left:1014.4px;top:276.9px" width="5" height="3.4" viewBox="0 0 5 3.4" ><path d="M0.4 0.4 L2.5 2.8 L4.6 0.4" fill="none" stroke="#a4a4a4" stroke-width="0.9"/></svg>
<div class="sep" style="left:895.6px;top:294.4px;width:170px"></div>
<svg style="left:901.8px;top:303.2px" width="5.6" height="3.6" viewBox="0 0 5.6 3.6" ><path d="M0.4 0.4 L2.8 3 L5.2 0.4" fill="none" stroke="#9a9a9a" stroke-width="0.9"/></svg>
<div class="a" style="left:903.6px;top:317.3px;width:14.5px;height:16.3px;background:#353535;border-radius:1px"></div>
<svg style="left:905.6px;top:320px" width="11" height="11" viewBox="0 0 11 11" ><path d="M3 0 V11 M0 3 H11 M0 7.6 H11" stroke="#e6e6e6" stroke-width="0.9"/><path d="M7.6 0 V11" stroke="#bbb" stroke-width="0.7"/></svg>
<svg style="left:926.4px;top:320px" width="11" height="12" viewBox="0 0 11 12" ><path d="M3 0 V11 M6.4 0 V11 M0 3.4 H11 M0 7 H8" stroke="#d8d8d8" stroke-width="0.8"/><rect x="7.2" y="8" width="3.8" height="3.4" fill="#e8e8e8"/><path d="M8 8 V7 A1.1 1.1 0 0 1 10.2 7 V8" fill="none" stroke="#e8e8e8" stroke-width="0.7"/></svg>
<div class="a" style="left:944.3px;top:317.3px;width:14.4px;height:16.3px;background:#353535;border-radius:1px"></div>
<svg style="left:946.2px;top:320px" width="11" height="11" viewBox="0 0 11 11" ><path d="M3 0 V11 M0 3.2 H11" stroke="#e6e6e6" stroke-width="0.9"/><path d="M4.6 4.6 L8 3.2 L8 9.2 L9.8 9.2 L9.8 4" fill="none" stroke="#e6e6e6" stroke-width="0.9"/><rect x="8.4" y="7.2" width="2.4" height="2.6" fill="#e6e6e6"/></svg>
<div class="dd" style="left:975.5px;top:320px;width:45.1px;height:12.8px"></div>
<svg style="left:1014.4px;top:325.0px" width="5" height="3.4" viewBox="0 0 5 3.4" ><path d="M0.4 0.4 L2.5 2.8 L4.6 0.4" fill="none" stroke="#a4a4a4" stroke-width="0.9"/></svg>
<div class="a" style="left:979px;top:326.6px;width:27px;height:1.2px;background:#e4e4e4"></div>
<div class="sep" style="left:895.6px;top:341px;width:170px"></div>
<svg style="left:901.8px;top:350.3px" width="5.6" height="3.6" viewBox="0 0 5.6 3.6" ><path d="M0.4 0.4 L2.8 3 L5.2 0.4" fill="none" stroke="#9a9a9a" stroke-width="0.9"/></svg>
<div class="a" style="left:1066.8px;top:95px;width:7px;height:272px;background:#4b4b4b"></div>
<div class="a" style="left:1067.2px;top:105px;width:6.2px;height:220.5px;background:#6a6a6a"></div>
<svg style="left:1067.8px;top:98.8px" width="5" height="3.2" viewBox="0 0 5 3.2" ><path d="M0.4 2.8 L2.5 0.5 L4.6 2.8" fill="none" stroke="#8a8a8a" stroke-width="0.8"/></svg>
<svg style="left:1067.8px;top:360px" width="5" height="3.2" viewBox="0 0 5 3.2" ><path d="M0.4 0.4 L2.5 2.7 L4.6 0.4" fill="none" stroke="#8a8a8a" stroke-width="0.8"/></svg>
<div class="a" style="left:895.6px;top:386.2px;width:179.8px;height:334px;background:#535353"></div>
<div class="a" style="left:895.6px;top:386.2px;width:179.8px;height:20.6px;background:#424242"></div>
<div class="a" style="left:895.6px;top:386.2px;width:29.8px;height:21px;background:#535353"></div>
<svg style="left:1065.8px;top:394.4px" width="6.2" height="5" viewBox="0 0 6.2 5" ><path d="M0 0.6 H6.2 M0 2.5 H6.2 M0 4.4 H6.2" stroke="#cfcfcf" stroke-width="0.9"/></svg>
<div class="dd" style="left:899.3px;top:413.7px;width:52.6px;height:11.9px"></div>
<svg style="left:903.4px;top:416.4px" width="6.6" height="7" viewBox="0 0 6.6 7" ><circle cx="2.7" cy="2.7" r="2" fill="none" stroke="#ececec" stroke-width="1.1"/><path d="M4.2 4.2 L6.2 6.4" stroke="#ececec" stroke-width="1.2"/></svg>
<svg style="left:943.8px;top:418.2px" width="5" height="3.4" viewBox="0 0 5 3.4" ><path d="M0.4 0.4 L2.5 2.8 L4.6 0.4" fill="none" stroke="#a4a4a4" stroke-width="0.9"/></svg>
<svg style="left:959.2px;top:416.1px" width="9" height="7.8" viewBox="0 0 9 7.8" ><rect x="0.5" y="0.5" width="8" height="6.8" fill="none" stroke="#e4e4e4" stroke-width="0.9"/><path d="M1.4 6.2 L3.4 3.8 L4.8 5.4 L5.8 4.4 L7.6 6.2 Z" fill="#e4e4e4"/><circle cx="6.2" cy="2.4" r="0.7" fill="#e4e4e4"/></svg>
<svg style="left:975px;top:416.2px" width="7.6" height="7.6" viewBox="0 0 7.6 7.6" ><circle cx="3.8" cy="3.8" r="3.3" fill="none" stroke="#e4e4e4" stroke-width="0.9"/><path d="M1.5 6.1 A3.3 3.3 0 0 0 6.1 1.5 Z" fill="#e4e4e4"/></svg>
<svg style="left:1005px;top:416px" width="8.2" height="8.2" viewBox="0 0 8.2 8.2" ><rect x="1.4" y="1.4" width="5.4" height="5.4" fill="none" stroke="#e4e4e4" stroke-width="0.9"/><rect x="0" y="0" width="2.2" height="2.2" fill="#e4e4e4"/><rect x="6" y="0" width="2.2" height="2.2" fill="#e4e4e4"/><rect x="0" y="6" width="2.2" height="2.2" fill="#e4e4e4"/><rect x="6" y="6" width="2.2" height="2.2" fill="#e4e4e4"/></svg>
<svg style="left:1020.8px;top:415.8px" width="7.4" height="8.6" viewBox="0 0 7.4 8.6" ><path d="M0.5 2.4 H2.8 V0.5 H5.2 L6.9 2.2 V8.1 H0.5 Z" fill="none" stroke="#e4e4e4" stroke-width="0.9"/><rect x="0.5" y="4.4" width="3.4" height="3.7" fill="#e4e4e4"/></svg>
<div class="a" style="left:1035.6px;top:414px;width:4.6px;height:10px;background:#3e3e3e;border-radius:2px"></div>
<div class="a" style="left:1035.1px;top:413.2px;width:5.7px;height:5.7px;background:#f2f2f2;border-radius:50%"></div>
<div class="sep" style="left:895.6px;top:429.2px;width:179.8px"></div>
<div class="dd" style="left:899.8px;top:434.4px;width:78.6px;height:10.3px;background:#4e4e4e;border:0.6px solid #474747"></div>
<svg style="left:970.6px;top:438px" width="5" height="3.4" viewBox="0 0 5 3.4" ><path d="M0.4 0.4 L2.5 2.8 L4.6 0.4" fill="none" stroke="#676767" stroke-width="0.9"/></svg>
<div class="dd" style="left:1009.4px;top:435.2px;width:21px;height:8.6px;background:#464646"></div>
<div class="dd" style="left:1031.2px;top:435.2px;width:8.6px;height:8.6px;background:#4c4c4c"></div>
<div class="sep" style="left:895.6px;top:449px;width:179.8px"></div>
<svg style="left:919.8px;top:454.2px" width="8" height="8" viewBox="0 0 8 8" ><rect x="0.4" y="0.4" width="7.2" height="7.2" fill="none" stroke="#bebebe" stroke-width="0.7"/><rect x="0.4" y="0.4" width="2.4" height="2.4" fill="#bebebe"/><rect x="5.2" y="0.4" width="2.4" height="2.4" fill="#bebebe"/><rect x="2.8" y="2.8" width="2.4" height="2.4" fill="#bebebe"/><rect x="0.4" y="5.2" width="2.4" height="2.4" fill="#bebebe"/><rect x="5.2" y="5.2" width="2.4" height="2.4" fill="#bebebe"/></svg>
<svg style="left:933.4px;top:454px" width="9" height="10" viewBox="0 0 9 10" ><path d="M8 0.6 L8.6 1.2 L4 6.6 L3 5.6 Z" fill="#bebebe"/><path d="M2.6 6 L3.6 7 C3.2 8.6 1.8 9.2 0.4 8.8 C1.4 8.2 1.4 6.8 2.6 6 Z" fill="#bebebe"/></svg>
<svg style="left:946.8px;top:454.4px" width="9" height="9" viewBox="0 0 12 12" ><path d="M6 0 L8 2.4 H6.6 V5.4 H9.6 V4 L12 6 L9.6 8 V6.6 H6.6 V9.6 H8 L6 12 L4 9.6 H5.4 V6.6 H2.4 V8 L0 6 L2.4 4 V5.4 H5.4 V2.4 H4 Z" fill="#bebebe"/></svg>
<svg style="left:961px;top:455px" width="8.6" height="8" viewBox="0 0 8.6 8" ><path d="M2 0 V6 H8.6 M0 2 H6 V8" fill="none" stroke="#bebebe" stroke-width="1"/></svg>
<svg style="left:975.8px;top:454.4px" width="7.2" height="8.8" viewBox="0 0 7.2 8.8" ><rect x="0.2" y="3.8" width="6.8" height="4.8" rx="0.6" fill="#bebebe"/><path d="M1.7 3.8 V2.4 A1.9 1.9 0 0 1 5.5 2.4 V3.8" fill="none" stroke="#bebebe" stroke-width="1"/></svg>
<div class="dd" style="left:1009.4px;top:455.3px;width:21px;height:8px;background:#464646"></div>
<div class="dd" style="left:1031.2px;top:455.3px;width:8.6px;height:8px;background:#4c4c4c"></div>
<div class="sep" style="left:895.6px;top:469.6px;width:179.8px;background:#484848"></div>
<div class="a" style="left:916.4px;top:470px;width:1px;height:238px;background:#4c4c4c"></div>
<svg style="left:900.6px;top:475.8px" width="10" height="6.4" viewBox="0 0 10 6.4" ><path d="M0.3 3.2 C2 0.4 8 0.4 9.7 3.2 C8 6 2 6 0.3 3.2 Z" fill="#d0d0d0"/><circle cx="5" cy="3.2" r="1.7" fill="#535353"/><circle cx="5" cy="3.2" r="0.8" fill="#d0d0d0"/></svg>
<svg style="left:926.9px;top:477.2px" width="5.6" height="3.6" viewBox="0 0 5.6 3.6" ><path d="M0.4 0.4 L2.8 3 L5.2 0.4" fill="none" stroke="#b0b0b0" stroke-width="0.9"/></svg>
<svg style="left:934.7px;top:474.3px" width="9.6" height="7.8" viewBox="0 0 9.6 7.8" ><path d="M0.4 1 H3.6 L4.6 2.2 H9.2 V7.4 H0.4 Z" fill="#e4e4e4"/><path d="M0.4 3.3 H9.2" stroke="#535353" stroke-width="0.6"/></svg>
<div class="sep" style="left:895.6px;top:485.8px;width:170.6px;background:#4c4c4c"></div>
<svg style="left:900.6px;top:498.3px" width="10" height="6.4" viewBox="0 0 10 6.4" ><path d="M0.3 3.2 C2 0.4 8 0.4 9.7 3.2 C8 6 2 6 0.3 3.2 Z" fill="#d0d0d0"/><circle cx="5" cy="3.2" r="1.7" fill="#535353"/><circle cx="5" cy="3.2" r="0.8" fill="#d0d0d0"/></svg>
<div class="sep" style="left:895.6px;top:514.5px;width:170.6px;background:#4c4c4c"></div>
<svg style="left:900.6px;top:527.0px" width="10" height="6.4" viewBox="0 0 10 6.4" ><path d="M0.3 3.2 C2 0.4 8 0.4 9.7 3.2 C8 6 2 6 0.3 3.2 Z" fill="#d0d0d0"/><circle cx="5" cy="3.2" r="1.7" fill="#535353"/><circle cx="5" cy="3.2" r="0.8" fill="#d0d0d0"/></svg>
<div class="a" style="left:937.8px;top:519.4000000000001px;width:15.1px;height:20.6px;background:#fff;background-image:conic-gradient(#d2d2d2 25%,#fff 0 50%,#d2d2d2 0 75%,#fff 0);background-size:4px 4px"></div>
<div class="a" style="left:939.6px;top:522.2px;width:2px;height:3.6px;background:#b4574a"></div>
<div class="sep" style="left:895.6px;top:543.2px;width:170.6px;background:#4c4c4c"></div>
<svg style="left:900.6px;top:555.5999999999999px" width="10" height="6.4" viewBox="0 0 10 6.4" ><path d="M0.3 3.2 C2 0.4 8 0.4 9.7 3.2 C8 6 2 6 0.3 3.2 Z" fill="#d0d0d0"/><circle cx="5" cy="3.2" r="1.7" fill="#535353"/><circle cx="5" cy="3.2" r="0.8" fill="#d0d0d0"/></svg>
<div class="sep" style="left:895.6px;top:571.9px;width:170.6px;background:#4c4c4c"></div>
<div class="a" style="left:901.9px;top:581.4px;width:8.9px;height:10.8px;border:0.7px solid #5a5a5a;opacity:0.8"></div>
<div class="sep" style="left:895.6px;top:600.6px;width:170.6px;background:#4c4c4c"></div>
<svg style="left:900.6px;top:612.0px" width="10" height="6.4" viewBox="0 0 10 6.4" ><path d="M0.3 3.2 C2 0.4 8 0.4 9.7 3.2 C8 6 2 6 0.3 3.2 Z" fill="#d0d0d0"/><circle cx="5" cy="3.2" r="1.7" fill="#535353"/><circle cx="5" cy="3.2" r="0.8" fill="#d0d0d0"/></svg>
<div class="sep" style="left:895.6px;top:629.3px;width:170.6px;background:#4c4c4c"></div>
<svg style="left:900.6px;top:640.5999999999999px" width="10" height="6.4" viewBox="0 0 10 6.4" ><path d="M0.3 3.2 C2 0.4 8 0.4 9.7 3.2 C8 6 2 6 0.3 3.2 Z" fill="#d0d0d0"/><circle cx="5" cy="3.2" r="1.7" fill="#535353"/><circle cx="5" cy="3.2" r="0.8" fill="#d0d0d0"/></svg>
<div class="sep" style="left:895.6px;top:658.0px;width:170.6px;background:#4c4c4c"></div>
<svg style="left:900.6px;top:668.4px" width="10" height="6.4" viewBox="0 0 10 6.4" ><path d="M0.3 3.2 C2 0.4 8 0.4 9.7 3.2 C8 6 2 6 0.3 3.2 Z" fill="#d0d0d0"/><circle cx="5" cy="3.2" r="1.7" fill="#535353"/><circle cx="5" cy="3.2" r="0.8" fill="#d0d0d0"/></svg>
<div class="sep" style="left:895.6px;top:686.7px;width:170.6px;background:#4c4c4c"></div>
<svg style="left:900.6px;top:697.4px" width="10" height="6.4" viewBox="0 0 10 6.4" ><path d="M0.3 3.2 C2 0.4 8 0.4 9.7 3.2 C8 6 2 6 0.3 3.2 Z" fill="#d0d0d0"/><circle cx="5" cy="3.2" r="1.7" fill="#535353"/><circle cx="5" cy="3.2" r="0.8" fill="#d0d0d0"/></svg>
<div class="a" style="left:1066.3px;top:471px;width:7.4px;height:237px;background:#4b4b4b"></div>
<div class="a" style="left:1066.8px;top:491px;width:6.4px;height:64px;background:#696969"></div>
<svg style="left:1067.5px;top:474.8px" width="5" height="3.2" viewBox="0 0 5 3.2" ><path d="M0.4 2.8 L2.5 0.5 L4.6 2.8" fill="none" stroke="#8a8a8a" stroke-width="0.8"/></svg>
<div class="a" style="left:895.6px;top:707.4px;width:179.8px;height:13px;background:#535353;border-top:1px solid #474747"></div>
<svg style="left:947.6px;top:711.4px" width="10" height="5.6" viewBox="0 0 10 5.6" ><rect x="0.5" y="0.8" width="5" height="4" rx="2" fill="none" stroke="#747474" stroke-width="1"/><rect x="4.5" y="0.8" width="5" height="4" rx="2" fill="none" stroke="#747474" stroke-width="1"/></svg>
<svg style="left:981.6px;top:709.8px" width="9" height="8" viewBox="0 0 9 8" ><rect x="0.5" y="0.5" width="8" height="7" fill="#d8d8d8"/><circle cx="4.5" cy="4" r="2.1" fill="#535353"/></svg>
<svg style="left:999.4px;top:709.6px" width="8.6" height="8.6" viewBox="0 0 8.6 8.6" ><circle cx="4.3" cy="4.3" r="3.7" fill="none" stroke="#e2e2e2" stroke-width="0.9"/><path d="M1.7 6.9 A3.7 3.7 0 0 0 6.9 1.7 Z" fill="#e2e2e2"/></svg>
<svg style="left:1006.6px;top:717px" width="2.4" height="2.4" viewBox="0 0 2.4 2.4" ><path d="M2.4 0 V2.4 H0 Z" fill="#c0c0c0"/></svg>
<svg style="left:1015.6px;top:710px" width="9.4" height="7.6" viewBox="0 0 9.4 7.6" ><path d="M0.4 1 H3.6 L4.6 2.2 H9 V7.2 H0.4 Z" fill="#e6e6e6"/></svg>
<svg style="left:1033px;top:709.6px" width="8.4" height="8.8" viewBox="0 0 8.4 8.8" ><rect x="0.5" y="0.5" width="7.4" height="7.8" fill="none" stroke="#e6e6e6" stroke-width="0.9"/><path d="M4.2 2.4 V6.4 M2.2 4.4 H6.2" stroke="#e6e6e6" stroke-width="0.9"/></svg>
<svg style="left:1050.4px;top:709.8px" width="7" height="8.6" viewBox="0 0 7 8.6" ><path d="M0.2 1.6 H6.8 M2.4 1.6 V0.5 H4.6 V1.6 M1 1.6 L1.4 8.2 H5.6 L6 1.6" fill="none" stroke="#7a7a7a" stroke-width="0.9"/><path d="M2.8 3.2 V6.8 M4.2 3.2 V6.8" stroke="#7a7a7a" stroke-width="0.6"/></svg>
<svg class="tx" style="left:0;top:0" width="1080" height="720" viewBox="0 0 1080 720" font-family="Liberation Sans, sans-serif">
<text x="5.30" y="9.83" font-size="5.4" fill="#9fd2fb" font-weight="bold" textLength="6.00" lengthAdjust="spacingAndGlyphs" >Ps</text>
<text x="22.00" y="11.02" font-size="7.6" fill="#e4e4e4" textLength="11.30" lengthAdjust="spacingAndGlyphs" >File</text>
<text x="40.70" y="11.02" font-size="7.6" fill="#e4e4e4" textLength="12.50" lengthAdjust="spacingAndGlyphs" >Edit</text>
<text x="61.20" y="11.02" font-size="7.6" fill="#e4e4e4" textLength="20.00" lengthAdjust="spacingAndGlyphs" >Image</text>
<text x="88.70" y="11.02" font-size="7.6" fill="#e4e4e4" textLength="17.60" lengthAdjust="spacingAndGlyphs" >Layer</text>
<text x="113.70" y="11.02" font-size="7.6" fill="#e4e4e4" textLength="15.80" lengthAdjust="spacingAndGlyphs" >Type</text>
<text x="137.00" y="11.02" font-size="7.6" fill="#e4e4e4" textLength="19.30" lengthAdjust="spacingAndGlyphs" >Select</text>
<text x="163.70" y="11.02" font-size="7.6" fill="#e4e4e4" textLength="15.80" lengthAdjust="spacingAndGlyphs" >Filter</text>
<text x="187.50" y="11.02" font-size="7.6" fill="#e4e4e4" textLength="8.30" lengthAdjust="spacingAndGlyphs" >3D</text>
<text x="204.40" y="11.02" font-size="7.6" fill="#e4e4e4" textLength="15.50" lengthAdjust="spacingAndGlyphs" >View</text>
<text x="227.40" y="11.02" font-size="7.6" fill="#e4e4e4" textLength="27.80" lengthAdjust="spacingAndGlyphs" >Window</text>
<text x="262.00" y="11.02" font-size="7.6" fill="#e4e4e4" textLength="15.60" lengthAdjust="spacingAndGlyphs" >Help</text>
<text x="78.30" y="31.13" font-size="6.5" fill="#e2e2e2" font-weight="bold" textLength="33.00" lengthAdjust="spacingAndGlyphs" >Auto-Select:</text>
<text x="126.20" y="31.33" font-size="6.5" fill="#e2e2e2" textLength="15.00" lengthAdjust="spacingAndGlyphs" >Layer</text>
<text x="175.10" y="31.13" font-size="6.5" fill="#e2e2e2" font-weight="bold" textLength="70.00" lengthAdjust="spacingAndGlyphs" >Show Transform Controls</text>
<text x="450.00" y="31.33" font-size="6.5" fill="#7e7e7e" textLength="26.70" lengthAdjust="spacingAndGlyphs" >3D Mode:</text>
<text x="31.90" y="53.25" font-size="7.4" fill="#f2f2f2" font-weight="bold" textLength="103.00" lengthAdjust="spacingAndGlyphs" >Italy id.psd @ 20.7% (RGB/16) *</text>
<text x="29.60" y="719.89" font-size="6.4" fill="#e6e6e6" textLength="18.40" lengthAdjust="spacingAndGlyphs" >20.66%</text>
<text x="70.40" y="719.89" font-size="6.4" fill="#e2e2e2" textLength="77.00" lengthAdjust="spacingAndGlyphs" >2232 px x 2854 px (250 ppi)</text>
<text x="877.60" y="118.34" font-size="13.8" fill="#dedede" textLength="8.00" lengthAdjust="spacingAndGlyphs" >A</text>
<text x="878.20" y="137.07" font-size="13.6" fill="#dedede" font-weight="bold" >¶</text>
<text x="877.00" y="165.56" font-size="14.4" fill="#dedede" font-family="Liberation Serif, serif" font-style="italic" >A</text>
<text x="901.50" y="60.56" font-size="6.6" fill="#bcbcbc" font-weight="bold" textLength="16.60" lengthAdjust="spacingAndGlyphs" >Swatc</text>
<text x="924.10" y="60.56" font-size="6.6" fill="#bcbcbc" font-weight="bold" textLength="16.30" lengthAdjust="spacingAndGlyphs" >Gradi</text>
<text x="946.90" y="60.56" font-size="6.6" fill="#bcbcbc" font-weight="bold" textLength="17.00" lengthAdjust="spacingAndGlyphs" >Patter</text>
<text x="969.20" y="60.56" font-size="6.6" fill="#bcbcbc" font-weight="bold" textLength="17.00" lengthAdjust="spacingAndGlyphs" >Histor</text>
<text x="991.80" y="60.56" font-size="6.6" fill="#bcbcbc" font-weight="bold" textLength="16.60" lengthAdjust="spacingAndGlyphs" >Actior</text>
<text x="1014.40" y="60.63" font-size="6.8" fill="#f6f6f6" font-weight="bold" textLength="30.50" lengthAdjust="spacingAndGlyphs" >Properties</text>
<text x="920.40" y="84.09" font-size="6.4" fill="#dadada" textLength="28.60" lengthAdjust="spacingAndGlyphs" >Document</text>
<text x="910.40" y="105.23" font-size="6.8" fill="#eeeeee" font-weight="bold" textLength="22.40" lengthAdjust="spacingAndGlyphs" >Canvas</text>
<text x="928.60" y="122.19" font-size="6.4" fill="#d2d2d2" textLength="5.60" lengthAdjust="spacingAndGlyphs" >W</text>
<text x="929.40" y="139.79" font-size="6.4" fill="#d2d2d2" textLength="4.40" lengthAdjust="spacingAndGlyphs" >H</text>
<text x="941.00" y="122.19" font-size="6.4" fill="#e6e6e6" textLength="21.80" lengthAdjust="spacingAndGlyphs" >2232 px</text>
<text x="941.00" y="139.79" font-size="6.4" fill="#e6e6e6" textLength="21.80" lengthAdjust="spacingAndGlyphs" >2854 px</text>
<text x="980.20" y="122.19" font-size="6.4" fill="#b4b4b4" textLength="4.20" lengthAdjust="spacingAndGlyphs" >X</text>
<text x="980.40" y="139.79" font-size="6.4" fill="#b4b4b4" textLength="4.20" lengthAdjust="spacingAndGlyphs" >Y</text>
<text x="991.80" y="122.19" font-size="6.4" fill="#646464" textLength="9.20" lengthAdjust="spacingAndGlyphs" >0 px</text>
<text x="991.80" y="139.79" font-size="6.4" fill="#646464" textLength="9.20" lengthAdjust="spacingAndGlyphs" >0 px</text>
<text x="938.70" y="182.09" font-size="6.4" fill="#d6d6d6" textLength="73.60" lengthAdjust="spacingAndGlyphs" >Resolution: 250 pixels/inch</text>
<text x="918.50" y="199.69" font-size="6.4" fill="#d2d2d2" textLength="15.00" lengthAdjust="spacingAndGlyphs" >Mode</text>
<text x="943.80" y="201.29" font-size="6.4" fill="#e4e4e4" textLength="26.60" lengthAdjust="spacingAndGlyphs" >RGB Color</text>
<text x="943.80" y="218.29" font-size="6.4" fill="#e4e4e4" textLength="43.70" lengthAdjust="spacingAndGlyphs" >16 Bits/Channel</text>
<text x="925.80" y="237.29" font-size="6.4" fill="#a8a8a8" textLength="7.20" lengthAdjust="spacingAndGlyphs" >Fill</text>
<text x="957.50" y="236.39" font-size="6.4" fill="#e4e4e4" textLength="34.30" lengthAdjust="spacingAndGlyphs" >Transparent</text>
<text x="910.40" y="260.23" font-size="6.8" fill="#eeeeee" font-weight="bold" textLength="43.60" lengthAdjust="spacingAndGlyphs" >Rulers &amp; Grids</text>
<text x="979.00" y="280.79" font-size="6.4" fill="#e4e4e4" textLength="15.40" lengthAdjust="spacingAndGlyphs" >Pixels</text>
<text x="910.40" y="307.63" font-size="6.8" fill="#eeeeee" font-weight="bold" textLength="20.40" lengthAdjust="spacingAndGlyphs" >Guides</text>
<text x="910.40" y="354.73" font-size="6.8" fill="#eeeeee" font-weight="bold" textLength="42.80" lengthAdjust="spacingAndGlyphs" >Quick Actions</text>
<text x="901.50" y="398.93" font-size="6.8" fill="#f4f4f4" font-weight="bold" textLength="18.70" lengthAdjust="spacingAndGlyphs" >Layers</text>
<text x="912.10" y="422.23" font-size="6.5" fill="#eaeaea" font-weight="bold" textLength="12.90" lengthAdjust="spacingAndGlyphs" >Kind</text>
<text x="990.20" y="423.89" font-size="10.6" fill="#e4e4e4" font-family="Liberation Serif, serif" font-weight="bold" >T</text>
<text x="903.60" y="441.89" font-size="6.4" fill="#6e6e6e" textLength="18.80" lengthAdjust="spacingAndGlyphs" >Normal</text>
<text x="983.20" y="441.89" font-size="6.4" fill="#6e6e6e" textLength="20.60" lengthAdjust="spacingAndGlyphs" >Opacity:</text>
<text x="1012.60" y="441.75" font-size="6" fill="#5e5e5e" textLength="13.40" lengthAdjust="spacingAndGlyphs" >100%</text>
<text x="899.80" y="461.59" font-size="6.4" fill="#6e6e6e" textLength="12.30" lengthAdjust="spacingAndGlyphs" >Lock:</text>
<text x="996.90" y="461.59" font-size="6.4" fill="#6e6e6e" textLength="7.40" lengthAdjust="spacingAndGlyphs" >Fill:</text>
<text x="1012.60" y="461.55" font-size="6" fill="#5e5e5e" textLength="13.40" lengthAdjust="spacingAndGlyphs" >100%</text>
<text x="951.20" y="481.26" font-size="6.3" fill="#ececec" font-weight="bold" textLength="24.60" lengthAdjust="spacingAndGlyphs" >edite text</text>
<text x="942.70" y="506.98" font-size="14.2" fill="#eeeeee" font-family="Liberation Serif, serif" >T</text>
<text x="963.00" y="503.76" font-size="6.3" fill="#ededed" font-weight="bold" textLength="20.20" lengthAdjust="spacingAndGlyphs" >Layer 2</text>
<text x="959.20" y="532.46" font-size="6.3" fill="#ededed" font-weight="bold" textLength="20.20" lengthAdjust="spacingAndGlyphs" >Layer 3</text>
<text x="942.70" y="564.28" font-size="14.2" fill="#eeeeee" font-family="Liberation Serif, serif" >T</text>
<text x="963.00" y="560.88" font-size="5.8" fill="#ededed" font-family="Liberation Serif, serif" font-weight="bold" textLength="82.70" lengthAdjust="spacingAndGlyphs" >citta0000000...&lt;&lt;&lt;&lt;&lt;&lt;&lt;&lt;0 d</text>
<text x="942.70" y="592.48" font-size="14.2" fill="#eeeeee" font-family="Liberation Serif, serif" >T</text>
<text x="963.00" y="589.08" font-size="5.8" fill="#ededed" font-family="Liberation Serif, serif" font-weight="bold" textLength="9.40" lengthAdjust="spacingAndGlyphs" >1aa</text>
<text x="942.70" y="620.68" font-size="14.2" fill="#eeeeee" font-family="Liberation Serif, serif" >T</text>
<text x="963.00" y="617.28" font-size="5.8" fill="#ededed" font-family="Liberation Serif, serif" font-weight="bold" textLength="10.00" lengthAdjust="spacingAndGlyphs" >169</text>
<text x="942.70" y="649.28" font-size="14.2" fill="#eeeeee" font-family="Liberation Serif, serif" >T</text>
<text x="963.00" y="645.88" font-size="5.8" fill="#ededed" font-family="Liberation Serif, serif" font-weight="bold" textLength="5.00" lengthAdjust="spacingAndGlyphs" >m</text>
<text x="942.70" y="677.08" font-size="14.2" fill="#eeeeee" font-family="Liberation Serif, serif" >T</text>
<text x="963.00" y="673.68" font-size="5.8" fill="#ededed" font-family="Liberation Serif, serif" font-weight="bold" textLength="19.50" lengthAdjust="spacingAndGlyphs" >1294...</text>
<text x="942.70" y="706.08" font-size="14.2" fill="#eeeeee" font-family="Liberation Serif, serif" >T</text>
<text x="963.00" y="702.68" font-size="5.8" fill="#ededed" font-family="Liberation Serif, serif" font-weight="bold" textLength="28.00" lengthAdjust="spacingAndGlyphs" >01.01.1990</text>
<text x="966.40" y="717.55" font-size="8.8" fill="#787878" font-family="Liberation Serif, serif" font-style="italic" >fx</text>
</svg>
<svg class="tx" style="left:0;top:0" width="1080" height="720" viewBox="0 0 1080 720"><text transform="scale(0.88 1)" x="970.23 991.14 1014.66 1044.89 1072.84 1094.09 1122.73" y="696.5" font-family="DejaVu Sans Light, DejaVu Sans, sans-serif" font-weight="200" font-size="40.9" fill="#1d1d1d" stroke="#1d1d1d" stroke-width="0.55">EKOGEA.</text><text transform="scale(0.75 1)" x="1330.13 1362.93 1393.87" y="696.7" font-family="Liberation Sans, sans-serif" font-size="42.2" fill="#6d8d22">ORG</text></svg>
</body></html>
